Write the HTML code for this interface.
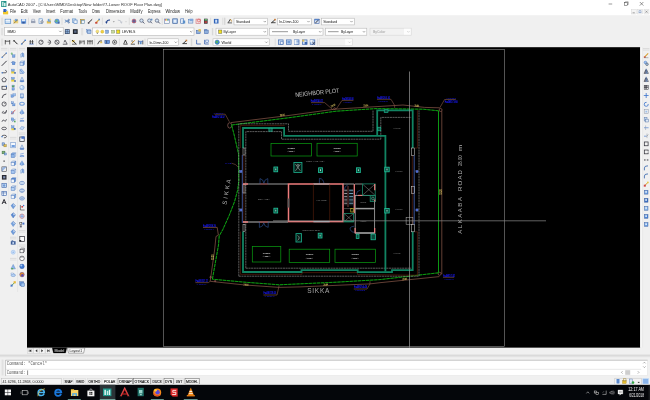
<!DOCTYPE html>
<html lang="en">
<head>
<meta charset="utf-8">
<title>AutoCAD 2007 - Lower ROOF Floor Plan.dwg</title>
<style>
html,body{margin:0;padding:0;width:650px;height:400px;overflow:hidden;background:linear-gradient(#fff 0,#fff 15px,#f0f0f0 15px,#f0f0f0 385px,#04060a 385px,#04060a 400px)}
svg{position:absolute;left:0;top:0;display:block;will-change:transform;filter:blur(0.38px)}
text{font-family:"Liberation Sans",sans-serif;white-space:pre}
text.mono{font-family:"Liberation Mono",monospace}
text.cad{font-family:"Liberation Sans",sans-serif}
</style>
</head>
<body>
<svg width="650" height="400" viewBox="0 0 650 400">
<g id="chrome">
<rect x="0" y="0" width="650" height="400" fill="#f0f0f0"/>
<rect x="0" y="0" width="650" height="15.2" fill="#ffffff"/>
<rect x="1.2" y="1" width="5.2" height="6" fill="#1f8f86"/>
<rect x="2" y="1.8" width="1.6" height="4.4" fill="#bfe6e0"/>
<rect x="4" y="2.8" width="1.6" height="3.4" fill="#d9f2ee"/>
<text x="7.8" y="5.9" font-size="4.4" fill="#303030" textLength="154.2" lengthAdjust="spacingAndGlyphs" class="ui">AutoCAD 2007 - [C:\Users\MMD\Desktop\New folder\!7-Lower ROOF Floor Plan.dwg]</text>
<line x1="608.6" y1="4" x2="612.2" y2="4" stroke="#333" stroke-width="0.5"/>
<rect x="624.4" y="2.6" width="2.8" height="2.8" fill="none" stroke="#333" stroke-width="0.45"/>
<polyline points="625.4,2.6 625.4,1.8 628.2,1.8 628.2,4.6 627.2,4.6" fill="none" stroke="#333" stroke-width="0.4"/>
<line x1="639.8" y1="2" x2="643.4" y2="5.6" stroke="#333" stroke-width="0.5"/>
<line x1="643.4" y1="2" x2="639.8" y2="5.6" stroke="#333" stroke-width="0.5"/>
<rect x="3" y="11.2" width="5.2" height="3.2" fill="#f0c830"/>
<rect x="3.4" y="9" width="2.6" height="3" fill="#2f5fb8"/>
<rect x="5.6" y="9.6" width="1.6" height="1.6" fill="#6fa0e0"/>
<text x="10" y="13.3" font-size="4.5" fill="#1c1c1c" textLength="6" lengthAdjust="spacingAndGlyphs" class="ui">File</text>
<text x="20.8" y="13.3" font-size="4.5" fill="#1c1c1c" textLength="6.9" lengthAdjust="spacingAndGlyphs" class="ui">Edit</text>
<text x="32.8" y="13.3" font-size="4.5" fill="#1c1c1c" textLength="8" lengthAdjust="spacingAndGlyphs" class="ui">View</text>
<text x="46" y="13.3" font-size="4.5" fill="#1c1c1c" textLength="9.4" lengthAdjust="spacingAndGlyphs" class="ui">Insert</text>
<text x="60.3" y="13.3" font-size="4.5" fill="#1c1c1c" textLength="12.7" lengthAdjust="spacingAndGlyphs" class="ui">Format</text>
<text x="78.5" y="13.3" font-size="4.5" fill="#1c1c1c" textLength="8.5" lengthAdjust="spacingAndGlyphs" class="ui">Tools</text>
<text x="92.3" y="13.3" font-size="4.5" fill="#1c1c1c" textLength="7.7" lengthAdjust="spacingAndGlyphs" class="ui">Draw</text>
<text x="106" y="13.3" font-size="4.5" fill="#1c1c1c" textLength="19" lengthAdjust="spacingAndGlyphs" class="ui">Dimension</text>
<text x="130.3" y="13.3" font-size="4.5" fill="#1c1c1c" textLength="12.3" lengthAdjust="spacingAndGlyphs" class="ui">Modify</text>
<text x="148" y="13.3" font-size="4.5" fill="#1c1c1c" textLength="12.5" lengthAdjust="spacingAndGlyphs" class="ui">Express</text>
<text x="165.4" y="13.3" font-size="4.5" fill="#1c1c1c" textLength="14.6" lengthAdjust="spacingAndGlyphs" class="ui">Window</text>
<text x="185" y="13.3" font-size="4.5" fill="#1c1c1c" textLength="7.4" lengthAdjust="spacingAndGlyphs" class="ui">Help</text>
<rect x="631.2" y="9.4" width="5" height="4.6" fill="#f4f4f4" stroke="#d0d0d0" stroke-width="0.4"/>
<rect x="637.6" y="9.4" width="5" height="4.6" fill="#f4f4f4" stroke="#d0d0d0" stroke-width="0.4"/>
<rect x="644" y="9.4" width="5" height="4.6" fill="#f4f4f4" stroke="#d0d0d0" stroke-width="0.4"/>
<line x1="632.6" y1="12.8" x2="634.8" y2="12.8" stroke="#555" stroke-width="0.5"/>
<rect x="639" y="10.8" width="2" height="2" fill="none" stroke="#5b7fb8" stroke-width="0.45"/>
<line x1="645.4" y1="10.6" x2="647.6" y2="12.8" stroke="#555" stroke-width="0.45"/>
<line x1="647.6" y1="10.6" x2="645.4" y2="12.8" stroke="#555" stroke-width="0.45"/>
<line x1="2" y1="17.7" x2="2" y2="24.9" stroke="#b8b8b8" stroke-width="0.5"/><line x1="2.9" y1="17.7" x2="2.9" y2="24.9" stroke="#dcdcdc" stroke-width="0.4"/>
<rect x="5.1" y="19.2" width="5.6" height="4.3" fill="#cfe2f5" stroke="#5b8fc9" stroke-width="0.7"/><rect x="5.7" y="19.8" width="4.4" height="1.2" fill="#eef5fc"/>
<rect x="13.4" y="19.9" width="4.8" height="3.4" fill="#edd27a"/><rect x="14.8" y="18.9" width="2.6" height="2.2" fill="#7aa6d8"/><line x1="13.7" y1="23.4" x2="17.8" y2="19.7" stroke="#6b5a2a" stroke-width="0.6"/>
<rect x="21.1" y="19" width="5" height="4.6" fill="#5f92d6"/><rect x="21.9" y="19.2" width="3.4" height="2" fill="#e6eff9"/><rect x="22.3" y="21.9" width="2.4" height="1.6" fill="#34589a"/>
<line x1="28.5" y1="17.7" x2="28.5" y2="24.9" stroke="#c4c4c4" stroke-width="0.45"/>
<rect x="31" y="20.7" width="4.4" height="2.4" fill="#9aa3b5"/><rect x="31.9" y="19.1" width="2.6" height="2" fill="#e8ecf4" stroke="#7d8aa6" stroke-width="0.4"/>
<rect x="39" y="18.8" width="3.6" height="4.6" fill="#eef4fb" stroke="#5b8fc9" stroke-width="0.6"/><circle cx="42" cy="21.9" r="1.2" fill="#cfe0f4" stroke="#4a4a55" stroke-width="0.5"/>
<rect x="46.8" y="20.9" width="4.2" height="2.6" fill="#e3c050"/><rect x="47.8" y="18.9" width="3" height="2.8" fill="#6f9fd6"/><circle cx="50.3" cy="19.7" r="0.9" fill="#f4e08a"/>
<circle cx="57" cy="21.3" r="2.3" fill="#5aa0d8" stroke="#3f6ea8" stroke-width="0.4"/><circle cx="56.5" cy="21" r="1.1" fill="#74b86a"/><rect x="57.8" y="21.9" width="1.8" height="1.8" fill="#4668a8"/>
<line x1="62" y1="17.7" x2="62" y2="24.9" stroke="#c4c4c4" stroke-width="0.45"/>
<line x1="64.8" y1="19.9" x2="69.2" y2="22.3" stroke="#4a78b8" stroke-width="0.8"/><line x1="64.8" y1="22.3" x2="69.2" y2="19.9" stroke="#4a78b8" stroke-width="0.8"/><circle cx="68.7" cy="20" r="0.8" fill="none" stroke="#3a5f98" stroke-width="0.5"/><circle cx="68.7" cy="22.4" r="0.8" fill="none" stroke="#3a5f98" stroke-width="0.5"/>
<rect x="72.6" y="18.9" width="3.2" height="3.6" fill="#dfeaf7" stroke="#5b8fc9" stroke-width="0.6"/><rect x="73.9" y="20" width="3.2" height="3.6" fill="#eef4fb" stroke="#4a7dbd" stroke-width="0.6"/>
<rect x="80.4" y="19.3" width="4" height="4.2" fill="#d9b452" stroke="#8c7430" stroke-width="0.4"/><rect x="81.7" y="20.5" width="3" height="3.1" fill="#eef4fb" stroke="#5b8fc9" stroke-width="0.5"/>
<line x1="88.2" y1="23.1" x2="92.2" y2="19.3" stroke="#2c2c34" stroke-width="1"/><rect x="87.8" y="22.3" width="1.6" height="1.4" fill="#4a4a55"/>
<line x1="95.8" y1="22.9" x2="99.4" y2="19.3" stroke="#d8a23a" stroke-width="1.2"/><rect x="95.2" y="21.9" width="2.2" height="1.8" fill="#c8483a"/><rect x="98.4" y="18.7" width="1.6" height="1.6" fill="#5b8fc9"/>
<line x1="102.4" y1="17.7" x2="102.4" y2="24.9" stroke="#c4c4c4" stroke-width="0.45"/>
<path d="M106.4 23.1 q0.2 -3.4 3.6 -3.0" fill="none" stroke="#1f3f8a" stroke-width="1.1"/><polygon points="105.3,21.7 107.6,21.7 106.4,23.7" fill="#1f3f8a" stroke="#1f3f8a" stroke-width="0.1"/>
<polygon points="113.1,21.5 114.5,21.5 113.8,22.3" fill="#555" stroke="#555" stroke-width="0.1"/>
<path d="M121.4 23.1 q-0.2 -3.4 -3.6 -3.0" fill="none" stroke="#c4c8d0" stroke-width="1.0"/><polygon points="120.2,21.7 122.5,21.7 121.4,23.7" fill="#c4c8d0" stroke="#c4c8d0" stroke-width="0.1"/>
<polygon points="125.3,21.5 126.7,21.5 126,22.3" fill="#bbb" stroke="#bbb" stroke-width="0.1"/>
<line x1="129.3" y1="17.7" x2="129.3" y2="24.9" stroke="#c4c4c4" stroke-width="0.45"/>
<rect x="132.2" y="19.3" width="3.6" height="3.6" fill="#c9525a"/><line x1="131.6" y1="21.1" x2="136.4" y2="21.1" stroke="#3d66ad" stroke-width="0.8"/><line x1="134" y1="18.7" x2="134" y2="23.5" stroke="#3d66ad" stroke-width="0.8"/>
<circle cx="141.5" cy="20.6" r="1.7" fill="#d6e6f6" stroke="#3f4a66" stroke-width="0.6"/><line x1="142.7" y1="21.8" x2="144.4" y2="23.5" stroke="#3f4a66" stroke-width="0.9"/>
<circle cx="149.3" cy="20.6" r="1.7" fill="#d6e6f6" stroke="#3f4a66" stroke-width="0.6"/><line x1="150.5" y1="21.8" x2="152" y2="23.3" stroke="#3f4a66" stroke-width="0.9"/><rect x="150.8" y="18.7" width="1.6" height="1.6" fill="#5b8fc9"/>
<circle cx="157" cy="20.6" r="1.7" fill="#d6e6f6" stroke="#3f4a66" stroke-width="0.6"/><line x1="158.2" y1="21.8" x2="159.9" y2="23.5" stroke="#3f4a66" stroke-width="0.9"/>
<line x1="162.2" y1="17.7" x2="162.2" y2="24.9" stroke="#c4c4c4" stroke-width="0.45"/>
<rect x="164.7" y="19" width="4.6" height="4.4" fill="#f4f6fa" stroke="#5570a0" stroke-width="0.5"/><rect x="165" y="19.3" width="0.9" height="1.2" fill="#d83a3a"/><rect x="166.05" y="19.3" width="0.9" height="1.2" fill="#e8c030"/><rect x="167.1" y="19.3" width="0.9" height="1.2" fill="#38a848"/><rect x="168.15" y="19.3" width="0.9" height="1.2" fill="#3a68d0"/>
<rect x="172.7" y="18.8" width="4.6" height="4.8" fill="#8fb4e0" stroke="#3f6098" stroke-width="0.6"/><rect x="173.6" y="19.7" width="2.8" height="3" fill="#e6eef9"/>
<rect x="180.7" y="18.8" width="3" height="4.8" fill="#e6eef9" stroke="#4a76b6" stroke-width="0.6"/><rect x="182.8" y="20.5" width="2.4" height="3" fill="#5b8fc9"/>
<rect x="188.5" y="19.5" width="4.4" height="3.6" fill="#cfe0f4" stroke="#4a76b6" stroke-width="0.5"/><rect x="189.6" y="18.7" width="3.6" height="2.4" fill="#7ea7dc"/>
<rect x="196" y="19.1" width="4.4" height="4.2" fill="#f3dede" stroke="#d0707a" stroke-width="0.6"/><circle cx="198.8" cy="20.5" r="1.4" fill="none" stroke="#d84a4a" stroke-width="0.6"/>
<rect x="204" y="18.7" width="3.6" height="5" fill="#2c2f36"/><rect x="204.5" y="19.2" width="2.6" height="1.3" fill="#7ad07a"/><rect x="204.5" y="21.1" width="2.6" height="2" fill="#b04040"/>
<line x1="210.6" y1="17.7" x2="210.6" y2="24.9" stroke="#c4c4c4" stroke-width="0.45"/>
<rect x="213.9" y="18.9" width="4.6" height="4.6" fill="#2f62b8"/><rect x="215.2" y="19.7" width="2" height="3" fill="#cfe0f8"/>
<line x1="222.8" y1="17.7" x2="222.8" y2="24.9" stroke="#c4c4c4" stroke-width="0.45"/>
<line x1="227.6" y1="22.9" x2="232" y2="22.9" stroke="#333" stroke-width="0.7"/><line x1="228.2" y1="22.7" x2="230.4" y2="19.1" stroke="#333" stroke-width="0.9"/><line x1="230.4" y1="19.1" x2="231.6" y2="21.5" stroke="#c08a30" stroke-width="0.9"/>
<line x1="271" y1="22.7" x2="275.6" y2="22.7" stroke="#222" stroke-width="0.8"/><line x1="271.8" y1="22.5" x2="274.8" y2="19.9" stroke="#222" stroke-width="0.9"/><rect x="274.2" y="18.8" width="1.6" height="1.6" fill="#c87830"/>
<rect x="314.7" y="19.1" width="4.4" height="4.2" fill="#dbe7f7" stroke="#3f63a8" stroke-width="0.6"/><line x1="315.4" y1="23.1" x2="319.2" y2="19.1" stroke="#2b2b33" stroke-width="0.9"/><rect x="314.7" y="19.1" width="4.4" height="1.2" fill="#4f7fc8"/>
<line x1="224.6" y1="17.7" x2="224.6" y2="24.9" stroke="#b8b8b8" stroke-width="0.5"/><line x1="225.5" y1="17.7" x2="225.5" y2="24.9" stroke="#dcdcdc" stroke-width="0.4"/>
<rect x="234" y="18.2" width="33.6" height="6.7" fill="#ffffff" stroke="#b4b4b4" stroke-width="0.55"/><polyline points="263.6,20.95 264.8,22.15 266,20.95" fill="none" stroke="#555" stroke-width="0.5"/>
<text x="236" y="23" font-size="4.4" fill="#111" textLength="14.2" lengthAdjust="spacingAndGlyphs" class="ui">Standard</text>
<rect x="277.5" y="18.2" width="33.8" height="6.7" fill="#ffffff" stroke="#b4b4b4" stroke-width="0.55"/><polyline points="307.3,20.95 308.5,22.15 309.7,20.95" fill="none" stroke="#555" stroke-width="0.5"/>
<text x="279.3" y="23" font-size="4.4" fill="#111" textLength="19.2" lengthAdjust="spacingAndGlyphs" class="ui">In-Dimn-100</text>
<rect x="321.6" y="18.2" width="32.7" height="6.7" fill="#ffffff" stroke="#b4b4b4" stroke-width="0.55"/><polyline points="350.3,20.95 351.5,22.15 352.7,20.95" fill="none" stroke="#555" stroke-width="0.5"/>
<text x="323.2" y="23" font-size="4.4" fill="#111" textLength="14" lengthAdjust="spacingAndGlyphs" class="ui">Standard</text>
<line x1="2" y1="28.1" x2="2" y2="35.3" stroke="#b8b8b8" stroke-width="0.5"/><line x1="2.9" y1="28.1" x2="2.9" y2="35.3" stroke="#dcdcdc" stroke-width="0.4"/>
<rect x="4.6" y="27.4" width="58.6" height="8" fill="#ffffff" stroke="#b4b4b4" stroke-width="0.55"/><polyline points="59.2,30.8 60.4,32 61.6,30.8" fill="none" stroke="#555" stroke-width="0.5"/>
<text x="7.4" y="33.2" font-size="4.2" fill="#111" textLength="8.4" lengthAdjust="spacingAndGlyphs" class="ui">MMD</text>
<rect x="64.9" y="29.2" width="4.8" height="4.8" fill="#3a4a66"/><rect x="65.6" y="29.9" width="3.4" height="3.4" fill="#8fb4e0"/><line x1="67.3" y1="29.2" x2="67.3" y2="34" stroke="#3a4a66" stroke-width="0.5"/><line x1="64.9" y1="31.6" x2="69.7" y2="31.6" stroke="#3a4a66" stroke-width="0.5"/>
<rect x="72.9" y="29.2" width="4.8" height="4.8" fill="#23272e"/><rect x="74.1" y="30.4" width="2.4" height="2.4" fill="#5a6a86"/>
<line x1="82" y1="28.1" x2="82" y2="35.3" stroke="#b8b8b8" stroke-width="0.5"/><line x1="82.9" y1="28.1" x2="82.9" y2="35.3" stroke="#dcdcdc" stroke-width="0.4"/>
<rect x="86.6" y="29.5" width="3.6" height="2.6" fill="#dbe7f7" stroke="#5b84c0" stroke-width="0.5"/><rect x="87.4" y="30.7" width="3.6" height="2.8" fill="#a8c4e8" stroke="#4a70b0" stroke-width="0.5"/>
<rect x="92.6" y="27.9" width="101.4" height="7.4" fill="#ffffff" stroke="#b4b4b4" stroke-width="0.55"/><polyline points="190,31 191.2,32.2 192.4,31" fill="none" stroke="#555" stroke-width="0.5"/>
<circle cx="97.4" cy="31.4" r="1.5" fill="#f6e27a" stroke="#b8a040" stroke-width="0.3"/>
<rect x="96.8" y="32.7" width="1.2" height="1.2" fill="#909090"/>
<circle cx="102.3" cy="31.7" r="1.6" fill="#f0d040" stroke="#c0a030" stroke-width="0.3"/>
<rect x="105.6" y="30.1" width="3" height="3.2" fill="#8fb0dc" stroke="#4a70b0" stroke-width="0.4"/>
<rect x="111.6" y="30.3" width="3.2" height="2.8" fill="#c8d8a0" stroke="#7a9050" stroke-width="0.4"/>
<rect x="116.6" y="30" width="3.3" height="3.4" fill="#f0e020" stroke="#555" stroke-width="0.4"/>
<text x="122" y="33.1" font-size="4.4" fill="#111" textLength="13.4" lengthAdjust="spacingAndGlyphs" class="ui">LEVELS</text>
<rect x="196.4" y="30.5" width="3.8" height="3.2" fill="#8fb0dc" stroke="#3f63a8" stroke-width="0.5"/><rect x="198.4" y="29.1" width="2.4" height="2.4" fill="#e3c050"/>
<rect x="204.4" y="30.1" width="3.8" height="3.6" fill="#8fb0dc" stroke="#3f63a8" stroke-width="0.5"/><line x1="204.2" y1="29.7" x2="207.2" y2="29.7" stroke="#3f63a8" stroke-width="0.8"/>
<line x1="212.4" y1="28.1" x2="212.4" y2="35.3" stroke="#b8b8b8" stroke-width="0.5"/><line x1="213.3" y1="28.1" x2="213.3" y2="35.3" stroke="#dcdcdc" stroke-width="0.4"/>
<rect x="216" y="28.2" width="51.6" height="7" fill="#ffffff" stroke="#b4b4b4" stroke-width="0.55"/><polyline points="263.6,31.1 264.8,32.3 266,31.1" fill="none" stroke="#555" stroke-width="0.5"/>
<rect x="218.6" y="30" width="3.3" height="3.4" fill="#f0e020" stroke="#444" stroke-width="0.4"/>
<text x="223.6" y="33.1" font-size="4.4" fill="#111" textLength="12.4" lengthAdjust="spacingAndGlyphs" class="ui">ByLayer</text>
<rect x="269.6" y="28.2" width="53.4" height="7" fill="#ffffff" stroke="#b4b4b4" stroke-width="0.55"/><polyline points="319,31.1 320.2,32.3 321.4,31.1" fill="none" stroke="#555" stroke-width="0.5"/>
<line x1="272" y1="31.7" x2="288" y2="31.7" stroke="#8c8c8c" stroke-width="0.9"/>
<text x="293" y="33.1" font-size="4.4" fill="#111" textLength="12.2" lengthAdjust="spacingAndGlyphs" class="ui">ByLayer</text>
<rect x="325.4" y="28.2" width="41.4" height="7" fill="#ffffff" stroke="#b4b4b4" stroke-width="0.55"/><polyline points="362.8,31.1 364,32.3 365.2,31.1" fill="none" stroke="#555" stroke-width="0.5"/>
<line x1="328" y1="31.7" x2="338.6" y2="31.7" stroke="#8c8c8c" stroke-width="0.9"/>
<text x="341" y="33.1" font-size="4.4" fill="#111" textLength="12.2" lengthAdjust="spacingAndGlyphs" class="ui">ByLayer</text>
<rect x="370" y="28.2" width="41.2" height="7" fill="#f2f2f2" stroke="#d8d8d8" stroke-width="0.6"/><rect x="404" y="28.7" width="6.7" height="6" fill="#fdfdfd"/><polyline points="407.2,31.1 408.4,32.3 409.6,31.1" fill="none" stroke="#b4b4b4" stroke-width="0.5"/>
<text x="373" y="33.1" font-size="4.4" fill="#9a9a9a" textLength="12.4" lengthAdjust="spacingAndGlyphs" class="ui">ByColor</text>
<line x1="2" y1="38.6" x2="2" y2="45.8" stroke="#b8b8b8" stroke-width="0.5"/><line x1="2.9" y1="38.6" x2="2.9" y2="45.8" stroke="#dcdcdc" stroke-width="0.4"/>
<line x1="5.3" y1="40" x2="5.3" y2="44.4" stroke="#222" stroke-width="0.7"/><line x1="9.7" y1="40" x2="9.7" y2="44.4" stroke="#222" stroke-width="0.7"/><line x1="5.3" y1="41.2" x2="9.7" y2="41.2" stroke="#222" stroke-width="0.7"/>
<line x1="13.5" y1="40.2" x2="17.5" y2="44.2" stroke="#222" stroke-width="1"/><line x1="13.3" y1="41.6" x2="14.9" y2="40" stroke="#222" stroke-width="0.6"/>
<line x1="21.5" y1="44.2" x2="25.1" y2="40.4" stroke="#333" stroke-width="0.8"/><rect x="24.5" y="39.6" width="1.4" height="1.4" fill="#3a78d0"/><rect x="21.1" y="43.4" width="1.4" height="1.2" fill="#3a78d0"/>
<line x1="29.3" y1="44" x2="33.7" y2="44" stroke="#3a68c0" stroke-width="0.8"/><line x1="30.3" y1="40" x2="30.3" y2="44" stroke="#222" stroke-width="0.7"/><line x1="32.5" y1="40" x2="32.5" y2="44" stroke="#222" stroke-width="0.7"/><line x1="29.3" y1="41.8" x2="33.7" y2="41.8" stroke="#222" stroke-width="0.5"/>
<line x1="36.5" y1="38.6" x2="36.5" y2="45.8" stroke="#c4c4c4" stroke-width="0.45"/>
<circle cx="41" cy="42.2" r="2.1" fill="none" stroke="#2a2a32" stroke-width="0.7"/><line x1="41" y1="42.2" x2="42.4" y2="40.8" stroke="#2a2a32" stroke-width="0.6"/>
<path d="M48.6 40.1 a2.1 2.1 0 1 1 0 4.2" fill="none" stroke="#2a2a32" stroke-width="0.7"/><line x1="47.6" y1="42.2" x2="50.2" y2="42.2" stroke="#2a2a32" stroke-width="0.6"/>
<circle cx="57" cy="42.2" r="2.1" fill="none" stroke="#2a2a32" stroke-width="0.7"/><line x1="55.5" y1="40.7" x2="58.5" y2="43.7" stroke="#2a2a32" stroke-width="0.6"/>
<polyline points="62.8,44.2 67.2,44.2 65,40.2 64,42.4" fill="none" stroke="#2a2a32" stroke-width="0.7"/>
<line x1="70" y1="38.6" x2="70" y2="45.8" stroke="#c4c4c4" stroke-width="0.45"/>
<rect x="71.9" y="40" width="2.6" height="2.2" fill="#e3c050"/><line x1="72" y1="40" x2="76.4" y2="44.2" stroke="#222" stroke-width="0.9"/><line x1="72" y1="44.2" x2="76.4" y2="44.2" stroke="#222" stroke-width="0.6"/>
<line x1="79.8" y1="40.4" x2="79.8" y2="44.4" stroke="#222" stroke-width="0.7"/><line x1="84.2" y1="40.4" x2="84.2" y2="44.4" stroke="#222" stroke-width="0.7"/><line x1="79.8" y1="41.2" x2="84.2" y2="41.2" stroke="#222" stroke-width="0.6"/><line x1="79.8" y1="42.8" x2="82.4" y2="42.8" stroke="#222" stroke-width="0.6"/>
<line x1="87.8" y1="40" x2="87.8" y2="44.4" stroke="#222" stroke-width="0.7"/><line x1="90" y1="40" x2="90" y2="44.4" stroke="#222" stroke-width="0.7"/><line x1="92.2" y1="40" x2="92.2" y2="44.4" stroke="#222" stroke-width="0.7"/><line x1="87.8" y1="41.2" x2="92.2" y2="41.2" stroke="#222" stroke-width="0.6"/>
<line x1="94.6" y1="38.6" x2="94.6" y2="45.8" stroke="#c4c4c4" stroke-width="0.45"/>
<line x1="97.6" y1="44.2" x2="99.6" y2="41" stroke="#222" stroke-width="0.8"/><line x1="99.6" y1="41" x2="102" y2="41" stroke="#222" stroke-width="0.8"/><rect x="100.2" y="41.6" width="2" height="1.6" fill="#e3c050"/>
<rect x="104.9" y="40.4" width="4.6" height="3.2" fill="#6a9ae0" stroke="#2a4a90" stroke-width="0.5"/><line x1="106.6" y1="40.6" x2="106.6" y2="43.4" stroke="#222" stroke-width="0.5"/>
<circle cx="114.6" cy="42.2" r="2.1" fill="none" stroke="#222" stroke-width="0.6"/><line x1="113.6" y1="42.2" x2="115.6" y2="42.2" stroke="#222" stroke-width="0.6"/><line x1="114.6" y1="41.2" x2="114.6" y2="43.2" stroke="#222" stroke-width="0.6"/>
<line x1="119.4" y1="38.6" x2="119.4" y2="45.8" stroke="#c4c4c4" stroke-width="0.45"/>
<line x1="123.4" y1="44.2" x2="127.6" y2="44.2" stroke="#222" stroke-width="0.7"/><polyline points="123.8,43.8 125.4,40 127,43.8" fill="none" stroke="#222" stroke-width="0.8"/>
<line x1="130.8" y1="44.2" x2="135" y2="44.2" stroke="#222" stroke-width="0.7"/><line x1="131.4" y1="43.6" x2="134.8" y2="40.4" stroke="#c08a30" stroke-width="1"/><line x1="131.2" y1="41" x2="133" y2="41" stroke="#222" stroke-width="0.6"/>
<line x1="138.4" y1="40.4" x2="138.4" y2="44.4" stroke="#222" stroke-width="0.7"/><line x1="142.8" y1="40.4" x2="142.8" y2="44.4" stroke="#222" stroke-width="0.7"/><line x1="138.4" y1="41.4" x2="142.8" y2="41.4" stroke="#3a68c0" stroke-width="0.8"/><rect x="139.8" y="42" width="1.8" height="2.2" fill="#5b8fc9"/>
<line x1="145" y1="38.6" x2="145" y2="45.8" stroke="#c4c4c4" stroke-width="0.45"/>
<line x1="182.4" y1="43.6" x2="187" y2="43.6" stroke="#222" stroke-width="0.8"/><line x1="183.2" y1="43.4" x2="186.2" y2="40.8" stroke="#222" stroke-width="0.9"/><rect x="185.6" y="39.7" width="1.6" height="1.6" fill="#c87830"/>
<line x1="196.6" y1="39.8" x2="196.6" y2="44" stroke="#3a62b0" stroke-width="0.8"/><line x1="196.6" y1="44" x2="200.8" y2="44" stroke="#3a62b0" stroke-width="0.8"/>
<line x1="204.6" y1="39.8" x2="204.6" y2="44" stroke="#3a62b0" stroke-width="0.8"/><line x1="204.6" y1="44" x2="208.8" y2="44" stroke="#3a62b0" stroke-width="0.8"/><rect x="205.8" y="40" width="2.8" height="2.6" fill="#dbe7f7" stroke="#3a62b0" stroke-width="0.5"/>
<line x1="275.2" y1="38.6" x2="275.2" y2="45.8" stroke="#c4c4c4" stroke-width="0.45"/>
<rect x="278.5" y="39.9" width="4.6" height="4.4" fill="#c9dcf3" stroke="#3f68b0" stroke-width="0.7"/><rect x="280.4" y="41.8" width="2.6" height="2.4" fill="#f4f8fd" stroke="#3f68b0" stroke-width="0.5"/>
<rect x="286.5" y="39.9" width="4.6" height="4.4" fill="#c9dcf3" stroke="#3f68b0" stroke-width="0.7"/><rect x="287.4" y="40.8" width="2.8" height="2.6" fill="#6f9bd8"/>
<rect x="294.4" y="39.9" width="4.6" height="4.4" fill="#c9dcf3" stroke="#3f68b0" stroke-width="0.7"/><rect x="294.4" y="39.9" width="2" height="4.4" fill="#eef4fb"/><line x1="296.4" y1="41.8" x2="299" y2="41.8" stroke="#3f68b0" stroke-width="0.5"/>
<rect x="302.4" y="39.9" width="4.6" height="4.4" fill="#c9dcf3" stroke="#3f68b0" stroke-width="0.7"/><rect x="302.3" y="39.6" width="2" height="2" fill="#e3c050"/><rect x="304.7" y="42" width="2.4" height="2.4" fill="#3f68b0"/>
<rect x="310.2" y="39.9" width="4.6" height="4.4" fill="#c9dcf3" stroke="#3f68b0" stroke-width="0.7"/><rect x="310.2" y="39.9" width="2.4" height="2.4" fill="#eef4fb"/><line x1="312.3" y1="42" x2="314.9" y2="44.4" stroke="#2a3350" stroke-width="0.8"/><line x1="314.9" y1="42" x2="312.3" y2="44.4" stroke="#2a3350" stroke-width="0.8"/>
<line x1="317.6" y1="38.6" x2="317.6" y2="45.8" stroke="#c4c4c4" stroke-width="0.45"/>
<rect x="147.8" y="38.8" width="30.8" height="6.8" fill="#ffffff" stroke="#b4b4b4" stroke-width="0.55"/><polyline points="174.6,41.6 175.8,42.8 177,41.6" fill="none" stroke="#555" stroke-width="0.5"/>
<text x="149.4" y="43.7" font-size="4.4" fill="#111" textLength="19" lengthAdjust="spacingAndGlyphs" class="ui">In-Dimn-100</text>
<line x1="191.4" y1="38.6" x2="191.4" y2="45.8" stroke="#b8b8b8" stroke-width="0.5"/><line x1="192.3" y1="38.6" x2="192.3" y2="45.8" stroke="#dcdcdc" stroke-width="0.4"/>
<rect x="213" y="38.8" width="56.2" height="6.8" fill="#ffffff" stroke="#b4b4b4" stroke-width="0.55"/><polyline points="265.2,41.6 266.4,42.8 267.6,41.6" fill="none" stroke="#555" stroke-width="0.5"/>
<circle cx="217.2" cy="42.2" r="2.2" fill="#3f8fd0" stroke="#2a5a98" stroke-width="0.4"/><circle cx="216.8" cy="42" r="1.2" fill="#58b060"/>
<text x="221.6" y="43.7" font-size="4.4" fill="#111" textLength="9.8" lengthAdjust="spacingAndGlyphs" class="ui">World</text>
<rect x="319.2" y="38.8" width="33.2" height="6.8" fill="#f2f2f2" stroke="#d8d8d8" stroke-width="0.6"/><rect x="345.2" y="39.3" width="6.7" height="5.8" fill="#fdfdfd"/><polyline points="348.4,41.6 349.6,42.8 350.8,41.6" fill="none" stroke="#b4b4b4" stroke-width="0.5"/>
<rect x="27" y="47.2" width="613.2" height="300.6" fill="#000000"/>
<rect x="163.4" y="49.3" width="341" height="297" fill="none" stroke="#a8a8a8" stroke-width="0.5"/>
</g>
<g id="drawing">
<text x="295.4" y="96.9" font-size="6.3" fill="#c4c4c4" class="cad" textLength="44.4" lengthAdjust="spacingAndGlyphs" transform="rotate(-5.6 295.4 96.9)">NEIGHBOR PLOT</text>
<text x="307.2" y="292.8" font-size="6.5" fill="#a8a8a8" class="cad" textLength="22.2" lengthAdjust="spacing">SIKKA</text>
<text x="226.4" y="205.0" font-size="6.2" fill="#b4b4b4" class="cad" textLength="25.8" lengthAdjust="spacing" transform="rotate(-80 226.4 205.0)">SIKKA</text>
<text x="461.9" y="233.7" font-size="6.1" fill="#b4b4b4" class="cad" textLength="36.7" lengthAdjust="spacing" transform="rotate(-90 461.9 233.7)">ALKAABA</text>
<text x="461.9" y="191.0" font-size="6.1" fill="#b4b4b4" class="cad" textLength="21.0" lengthAdjust="spacing" transform="rotate(-90 461.9 191.0)">ROAD</text>
<text x="461.9" y="166.0" font-size="6.1" fill="#b4b4b4" class="cad" textLength="10.6" lengthAdjust="spacingAndGlyphs" transform="rotate(-90 461.9 166.0)">28.00</text>
<text x="461.9" y="151.0" font-size="6.1" fill="#b4b4b4" class="cad" textLength="6.2" lengthAdjust="spacingAndGlyphs" transform="rotate(-90 461.9 151.0)">m</text>
<polyline points="231,122.6 290,115.3 334.6,109.2 403,105 424.6,107.4 439.4,107.8" fill="none" stroke="#8c5a4a" stroke-width="0.7"/>
<polyline points="441.8,111.2 441.8,274.2" fill="none" stroke="#8c5a4a" stroke-width="0.7"/>
<polyline points="439.4,276.6 380,282.7 370,283.9 300,286.9 279.2,287.4 245,285 210.2,281.3" fill="none" stroke="#8c5a4a" stroke-width="0.7"/>
<polyline points="210.2,281.2 214.6,250 216,236.4 218.4,235.2 217.2,227.4 203,227.4" fill="none" stroke="#8c5a4a" stroke-width="0.7"/>
<polyline points="214.6,114.2 225.2,114.2 229.4,121.8" fill="none" stroke="#8c5a4a" stroke-width="0.6"/>
<polyline points="311,102.6 324.6,102.6 333.2,110" fill="none" stroke="#8c5a4a" stroke-width="0.6"/>
<polyline points="353.4,100.4 342,100.4 336,109.4" fill="none" stroke="#8c5a4a" stroke-width="0.6"/>
<polyline points="377,99.3 391,99.3 394.6,105.4 394.6,107.8" fill="none" stroke="#8c5a4a" stroke-width="0.6"/>
<polyline points="455.8,99.5 444.6,99.5 439.4,108.4" fill="none" stroke="#8c5a4a" stroke-width="0.6"/>
<polyline points="263.4,295 277,295 279.2,285.4" fill="none" stroke="#8c5a4a" stroke-width="0.6"/>
<polyline points="353.8,289 367,289 370,283.9 370,281.2" fill="none" stroke="#8c5a4a" stroke-width="0.6"/>
<polyline points="443,277.3 454.2,277.3" fill="none" stroke="#8c5a4a" stroke-width="0.6"/>
<polyline points="195.4,282.6 208.4,282.6 210.2,281.3" fill="none" stroke="#8c5a4a" stroke-width="0.6"/>
<path d="M231.5 163.2 q4.6 0.6 7.0 4.4" fill="none" stroke="#8c5a4a" stroke-width="0.55"/>
<ellipse cx="229.7" cy="125.4" rx="2.0" ry="2.7" fill="none" stroke="#c8847a" stroke-width="0.5"/>
<circle cx="440.6" cy="110" r="1.5" fill="none" stroke="#c87c70" stroke-width="0.5"/>
<circle cx="439.6" cy="273.8" r="1.5" fill="none" stroke="#c87c70" stroke-width="0.5"/>
<circle cx="210.6" cy="277.2" r="0.8" fill="none" stroke="#e08a80" stroke-width="0.4"/>
<circle cx="215.2" cy="281" r="0.7" fill="none" stroke="#e08a80" stroke-width="0.4"/>
<circle cx="334.6" cy="108.6" r="0.9" fill="none" stroke="#c87c70" stroke-width="0.4"/>
<path d="M231.6 125 L290 117.6 L336 111.2 L376 108.6 L423 109.2 L438.5 110.8 L438.5 272.8 L380 279.6 L336 282.2 L290 284.3 L279.2 284.8 L245 282.2 L212.4 279.2 L218.5 245 L219.2 236 L223 229.2 L229.2 215.4 L234.6 201.5 L237.7 190 L238.8 181 L238.6 154.2 L234.2 135 Z" fill="none" stroke="#085408" stroke-width="0.7"/>
<polyline points="231.6,125 290,117.6 336,111.2 376,108.6 423,109.2 438.5,110.8" fill="none" stroke="#0fbc16" stroke-width="0.75" stroke-dasharray="3.2 0.9"/>
<line x1="438.5" y1="110.8" x2="438.5" y2="272.8" stroke="#0eb016" stroke-width="0.8"/>
<polyline points="438.5,272.8 380,279.6 336,282.2 290,284.3 279.2,284.8 245,282.2 212.4,279.2" fill="none" stroke="#0fbc16" stroke-width="0.75" stroke-dasharray="3.2 0.9"/>
<path d="M212.4 279.2 L218.5 245 L219.2 236 L223 229.2 L229.2 215.4 L234.6 201.5 L237.7 190 L238.8 181 L238.6 154.2 L234.2 135 L231.6 125" fill="none" stroke="#0fbc16" stroke-width="0.8" stroke-dasharray="3.2 0.9"/>
<polyline points="238.8,276.2 238.8,123.8 288.5,123.8 288.5,131.3 373,131.3 373,110.2" fill="none" stroke="#a4a4a4" stroke-width="0.55" stroke-dasharray="2.1 0.55"/>
<polyline points="238.8,276.2 419,276.2 419,110.4" fill="none" stroke="#a4a4a4" stroke-width="0.55" stroke-dasharray="2.1 0.55"/>
<polyline points="245.8,268.2 245.8,131.6 281.5,131.6 281.5,139.2 380.8,139.2 380.8,117.4 411.2,117.4" fill="none" stroke="#a4a4a4" stroke-width="0.55" stroke-dasharray="2.1 0.55"/>
<polyline points="245.8,268.2 411.2,268.2" fill="none" stroke="#a4a4a4" stroke-width="0.55" stroke-dasharray="2.1 0.55"/>
<polyline points="240.4,148 240.4,125.4 284.6,125.4" fill="none" stroke="#5a200c" stroke-width="0.7"/>
<line x1="243.9" y1="155" x2="243.9" y2="223" stroke="#5a200c" stroke-width="0.7"/>
<polyline points="240.4,231.5 240.4,274.3 302,274.3 302,272.6 357.4,272.6 357.4,274.6 417.4,275.2 417.4,231.8 414.6,231.8" fill="none" stroke="#5a200c" stroke-width="0.7"/>
<polyline points="417.4,110.2 417.4,148 414.6,148" fill="none" stroke="#5a200c" stroke-width="0.7"/>
<line x1="412.3" y1="155.3" x2="412.3" y2="224.6" stroke="#5a200c" stroke-width="0.7"/>
<polyline points="243,148 243,128 284.1,128 284.1,135.8 385.4,135.8 385.4,271.4" fill="none" stroke="#118362" stroke-width="1.8"/>
<polyline points="377.2,135.8 377.2,110.3 412.7,110.3 412.7,148" fill="none" stroke="#118362" stroke-width="1.8"/>
<polyline points="243,231.5 243,272 301.5,272 301.5,270.2 357.7,270.2 357.7,272.2 392,272.2 392,270.2 412.7,270.2 412.7,231.8" fill="none" stroke="#118362" stroke-width="1.8"/>
<line x1="242.3" y1="155" x2="242.3" y2="223" stroke="#5a78d8" stroke-width="0.7"/>
<line x1="414.2" y1="155.3" x2="414.2" y2="224.6" stroke="#5a78d8" stroke-width="0.7"/>
<rect x="239.7" y="170.4" width="2.2" height="2.2" fill="#4a66d0" stroke="#8aa0f0" stroke-width="0.3"/>
<rect x="239.7" y="208.9" width="2.2" height="2.2" fill="#4a66d0" stroke="#8aa0f0" stroke-width="0.3"/>
<rect x="415.9" y="170.4" width="2.2" height="2.2" fill="#4a66d0" stroke="#8aa0f0" stroke-width="0.3"/>
<rect x="415.9" y="208.9" width="2.2" height="2.2" fill="#4a66d0" stroke="#8aa0f0" stroke-width="0.3"/>
<rect x="243" y="148" width="2" height="7" fill="none" stroke="#d8d8d8" stroke-width="0.5"/>
<rect x="243" y="184.6" width="2" height="8.4" fill="none" stroke="#d8d8d8" stroke-width="0.5"/>
<rect x="243" y="224.6" width="2" height="6.9" fill="none" stroke="#d8d8d8" stroke-width="0.5"/>
<rect x="411.6" y="148" width="3" height="7.3" fill="none" stroke="#d8d8d8" stroke-width="0.5"/>
<rect x="411.6" y="186.5" width="3" height="6.9" fill="none" stroke="#d8d8d8" stroke-width="0.5"/>
<rect x="411.6" y="224.6" width="3" height="7.2" fill="none" stroke="#d8d8d8" stroke-width="0.5"/>
<text x="225" y="164" font-size="2.2" fill="#1c1cff" textLength="6.4" lengthAdjust="spacingAndGlyphs" class="cad">GATE</text>
<rect x="271" y="143.5" width="40.5" height="12.5" fill="none" stroke="#0aa012" stroke-width="0.7"/><text x="287.55" y="149.15" font-size="2.5" fill="#ececec" textLength="7.4" lengthAdjust="spacingAndGlyphs" class="cad">GREEN</text><text x="287.55" y="152.45" font-size="2.5" fill="#ececec" textLength="7.4" lengthAdjust="spacingAndGlyphs" class="cad">AREA</text>
<rect x="317" y="143.3" width="40.2" height="12.7" fill="none" stroke="#0aa012" stroke-width="0.7"/><text x="333.4" y="149.05" font-size="2.5" fill="#ececec" textLength="7.4" lengthAdjust="spacingAndGlyphs" class="cad">GREEN</text><text x="333.4" y="152.35" font-size="2.5" fill="#ececec" textLength="7.4" lengthAdjust="spacingAndGlyphs" class="cad">AREA</text>
<rect x="252.3" y="246.4" width="28.5" height="15.6" fill="none" stroke="#0aa012" stroke-width="0.7"/><text x="262.85" y="253.6" font-size="2.5" fill="#ececec" textLength="7.4" lengthAdjust="spacingAndGlyphs" class="cad">GREEN</text><text x="262.85" y="256.9" font-size="2.5" fill="#ececec" textLength="7.4" lengthAdjust="spacingAndGlyphs" class="cad">AREA</text>
<rect x="289.2" y="249.2" width="40.5" height="13.2" fill="none" stroke="#0aa012" stroke-width="0.7"/><text x="305.75" y="255.2" font-size="2.5" fill="#ececec" textLength="7.4" lengthAdjust="spacingAndGlyphs" class="cad">GREEN</text><text x="305.75" y="258.5" font-size="2.5" fill="#ececec" textLength="7.4" lengthAdjust="spacingAndGlyphs" class="cad">AREA</text>
<rect x="335" y="249.2" width="40.4" height="13.2" fill="none" stroke="#0aa012" stroke-width="0.7"/><text x="351.5" y="255.2" font-size="2.5" fill="#ececec" textLength="7.4" lengthAdjust="spacingAndGlyphs" class="cad">GREEN</text><text x="351.5" y="258.5" font-size="2.5" fill="#ececec" textLength="7.4" lengthAdjust="spacingAndGlyphs" class="cad">AREA</text>
<line x1="243" y1="184" x2="288" y2="184" stroke="#9a9a9a" stroke-width="1.1"/>
<line x1="243" y1="222" x2="288" y2="222" stroke="#b8b8b8" stroke-width="1"/>
<rect x="243" y="183.3" width="5" height="1.4" fill="#ee7c7c"/>
<rect x="243" y="221.3" width="5" height="1.4" fill="#ee7c7c"/>
<rect x="259.6" y="183.4" width="8.4" height="1.2" fill="#7a3434"/>
<rect x="259.2" y="221.4" width="9" height="1.2" fill="#a04848"/>
<path d="M260 184 v-5.4 q3.4 0.6 3.9 4.6 q0.5 -4.0 3.9 -4.6 v5.4" fill="none" stroke="#3a66b8" stroke-width="0.5"/>
<path d="M259.4 222 v5.4 q3.8 -0.6 4.4 -4.4 q0.6 3.8 4.4 4.4 v-5.4" fill="none" stroke="#3a66b8" stroke-width="0.5"/>
<path d="M319.4 184 v-5.6 q4.2 0.2 4.6 5.6" fill="none" stroke="#3a66b8" stroke-width="0.5"/>
<path d="M356.2 194.8 q0.4 -4.2 4.2 -4.6" fill="none" stroke="#3a66b8" stroke-width="0.5"/>
<path d="M354.6 232.4 q-4.4 -0.4 -4.6 -4.4 q1.4 -1.6 4.0 -1.8" fill="none" stroke="#3a66b8" stroke-width="0.5"/>
<rect x="288.5" y="184" width="54.5" height="37.6" fill="none" stroke="#ee7c7c" stroke-width="1.5"/>
<line x1="313.4" y1="184" x2="329.7" y2="184" stroke="#a0a0a0" stroke-width="1.3"/>
<line x1="313.4" y1="221.6" x2="329.7" y2="221.6" stroke="#b0b0b8" stroke-width="1.3"/>
<line x1="288.5" y1="198.5" x2="288.5" y2="207.6" stroke="#5a5a5a" stroke-width="1.7"/>
<line x1="313.4" y1="184.6" x2="313.4" y2="221" stroke="#5a200c" stroke-width="0.6"/>
<line x1="329.7" y1="184.6" x2="329.7" y2="221" stroke="#5a200c" stroke-width="0.6"/>
<line x1="354.3" y1="184" x2="354.3" y2="213.2" stroke="#ee7c7c" stroke-width="1.3"/>
<line x1="343" y1="184" x2="354.3" y2="184" stroke="#9a9a9a" stroke-width="1"/>
<line x1="348" y1="186" x2="348" y2="207" stroke="#d06868" stroke-width="0.55"/>
<line x1="344.2" y1="190.2" x2="347.2" y2="190.2" stroke="#b4b4bc" stroke-width="0.9"/>
<line x1="349.2" y1="190.2" x2="353.2" y2="190.2" stroke="#86c0de" stroke-width="0.9"/>
<line x1="344.2" y1="191.8" x2="347.2" y2="191.8" stroke="#6a6a72" stroke-width="0.4"/>
<line x1="349.2" y1="191.8" x2="353.2" y2="191.8" stroke="#4a7890" stroke-width="0.4"/>
<line x1="344.2" y1="193.45" x2="347.2" y2="193.45" stroke="#b4b4bc" stroke-width="0.9"/>
<line x1="349.2" y1="193.45" x2="353.2" y2="193.45" stroke="#86c0de" stroke-width="0.9"/>
<line x1="344.2" y1="195.05" x2="347.2" y2="195.05" stroke="#6a6a72" stroke-width="0.4"/>
<line x1="349.2" y1="195.05" x2="353.2" y2="195.05" stroke="#4a7890" stroke-width="0.4"/>
<line x1="344.2" y1="196.7" x2="347.2" y2="196.7" stroke="#b4b4bc" stroke-width="0.9"/>
<line x1="349.2" y1="196.7" x2="353.2" y2="196.7" stroke="#86c0de" stroke-width="0.9"/>
<line x1="344.2" y1="198.3" x2="347.2" y2="198.3" stroke="#6a6a72" stroke-width="0.4"/>
<line x1="349.2" y1="198.3" x2="353.2" y2="198.3" stroke="#4a7890" stroke-width="0.4"/>
<line x1="344.2" y1="199.95" x2="347.2" y2="199.95" stroke="#b4b4bc" stroke-width="0.9"/>
<line x1="349.2" y1="199.95" x2="353.2" y2="199.95" stroke="#86c0de" stroke-width="0.9"/>
<line x1="344.2" y1="201.55" x2="347.2" y2="201.55" stroke="#6a6a72" stroke-width="0.4"/>
<line x1="349.2" y1="201.55" x2="353.2" y2="201.55" stroke="#4a7890" stroke-width="0.4"/>
<line x1="344.2" y1="203.2" x2="347.2" y2="203.2" stroke="#b4b4bc" stroke-width="0.9"/>
<line x1="349.2" y1="203.2" x2="353.2" y2="203.2" stroke="#86c0de" stroke-width="0.9"/>
<line x1="344.2" y1="204.8" x2="347.2" y2="204.8" stroke="#6a6a72" stroke-width="0.4"/>
<line x1="349.2" y1="204.8" x2="353.2" y2="204.8" stroke="#4a7890" stroke-width="0.4"/>
<path d="M344.4 189.6 q0.2 -3.6 3.4 -4.6" fill="none" stroke="#3a66b8" stroke-width="0.5"/>
<line x1="344" y1="208.6" x2="352" y2="208.6" stroke="#8a8a8a" stroke-width="0.5"/>
<rect x="350.8" y="208.6" width="2.4" height="3.4" fill="none" stroke="#d8d030" stroke-width="0.6"/>
<rect x="344" y="213.4" width="9.6" height="8.4" fill="none" stroke="#1c8a6c" stroke-width="0.8"/>
<line x1="344.4" y1="213.8" x2="353.2" y2="221.4" stroke="#9a9a9a" stroke-width="0.45"/>
<line x1="353.2" y1="213.8" x2="344.4" y2="221.4" stroke="#9a9a9a" stroke-width="0.45"/>
<rect x="344" y="220.6" width="9.6" height="1.6" fill="#118362"/>
<rect x="355.2" y="195.4" width="19.4" height="37.6" fill="none" stroke="#9c9c9c" stroke-width="0.9"/>
<line x1="355.2" y1="208.6" x2="374.6" y2="208.6" stroke="#9c9c9c" stroke-width="1.5"/>
<line x1="355.2" y1="233" x2="374.6" y2="233" stroke="#d0d0d0" stroke-width="0.9"/>
<line x1="355" y1="184" x2="362.4" y2="184" stroke="#9a9a9a" stroke-width="0.9"/>
<rect x="362.4" y="183.9" width="12.8" height="11.5" fill="none" stroke="#1c8a6c" stroke-width="0.8"/>
<line x1="363" y1="184.5" x2="374.6" y2="194.8" stroke="#9a9a9a" stroke-width="0.45"/>
<line x1="374.6" y1="184.5" x2="363" y2="194.8" stroke="#9a9a9a" stroke-width="0.45"/>
<rect x="370.2" y="195.6" width="5.4" height="5.8" fill="#062a22" stroke="#1c8a6c" stroke-width="0.8"/>
<circle cx="372.9" cy="198.5" r="1.3" fill="none" stroke="#9adcc8" stroke-width="0.4"/>
<line x1="374.7" y1="184" x2="374.7" y2="190.2" stroke="#ee7c7c" stroke-width="1.2"/>
<line x1="374.7" y1="199.6" x2="374.7" y2="201.6" stroke="#ee7c7c" stroke-width="1.2"/>
<line x1="355.1" y1="228" x2="355.1" y2="233.2" stroke="#ee7c7c" stroke-width="1.2"/>
<line x1="374.7" y1="228" x2="374.7" y2="233.2" stroke="#ee7c7c" stroke-width="1.2"/>
<line x1="358" y1="195.4" x2="362.4" y2="195.4" stroke="#ee7c7c" stroke-width="1"/>
<rect x="273.9" y="167" width="3.8" height="4.8" fill="#0c4a3c" stroke="#22c8a0" stroke-width="0.8"/><rect x="275.3" y="168.5" width="1" height="1.8" fill="#9adcc8"/>
<rect x="318.6" y="167.8" width="3.8" height="4.8" fill="#0c4a3c" stroke="#22c8a0" stroke-width="0.8"/><rect x="320" y="169.3" width="1" height="1.8" fill="#9adcc8"/>
<rect x="356.5" y="167.8" width="3.8" height="4.8" fill="#0c4a3c" stroke="#22c8a0" stroke-width="0.8"/><rect x="357.9" y="169.3" width="1" height="1.8" fill="#9adcc8"/>
<rect x="273.9" y="208.2" width="3.8" height="4.8" fill="#0c4a3c" stroke="#22c8a0" stroke-width="0.8"/><rect x="275.3" y="209.7" width="1" height="1.8" fill="#9adcc8"/>
<rect x="318.2" y="233.2" width="3.8" height="4.8" fill="#0c4a3c" stroke="#22c8a0" stroke-width="0.8"/><rect x="319.6" y="234.7" width="1" height="1.8" fill="#9adcc8"/>
<rect x="384.8" y="167.2" width="4.4" height="4.6" fill="#0c4a3c" stroke="#22c8a0" stroke-width="0.8"/><rect x="386.5" y="168.6" width="1" height="1.8" fill="#9adcc8"/>
<rect x="384.8" y="208.4" width="4.4" height="4.6" fill="#0c4a3c" stroke="#22c8a0" stroke-width="0.8"/><rect x="386.5" y="209.8" width="1" height="1.8" fill="#9adcc8"/>
<rect x="268.9" y="128.2" width="3.2" height="3" fill="#0c4a3c" stroke="#22c8a0" stroke-width="0.6"/>
<rect x="377.8" y="127.2" width="3" height="3.6" fill="#0c4a3c" stroke="#22c8a0" stroke-width="0.6"/>
<rect x="384.2" y="109.8" width="3.8" height="2.6" fill="#0c4a3c" stroke="#22c8a0" stroke-width="0.6"/>
<rect x="356.2" y="234.2" width="2.8" height="4.4" fill="#0c4a3c" stroke="#22c8a0" stroke-width="0.7"/>
<rect x="371" y="234" width="4.4" height="5.8" fill="#0c4a3c" stroke="#22c8a0" stroke-width="0.7"/>
<rect x="293.9" y="162.5" width="8" height="9.9" fill="#041a14" stroke="#1ca888" stroke-width="0.9"/>
<line x1="295.4" y1="164.2" x2="300.4" y2="170.8" stroke="#e0e0e0" stroke-width="0.45"/>
<line x1="300.4" y1="164.2" x2="295.4" y2="170.8" stroke="#e0e0e0" stroke-width="0.45"/>
<circle cx="297.9" cy="165.2" r="0.9" fill="none" stroke="#e0e0e0" stroke-width="0.4"/>
<rect x="296" y="233.6" width="5.4" height="8.4" fill="#041a14" stroke="#1ca888" stroke-width="0.9"/>
<path d="M297.6 235.4 q3.2 2.4 0 5.0" fill="none" stroke="#e0e0e0" stroke-width="0.5"/>
<text x="306" y="161.8" font-size="2" fill="#8a8a8a" textLength="18.6" lengthAdjust="spacingAndGlyphs" class="cad">OPEN YARD AREA</text>
<text x="258" y="199.9" font-size="2" fill="#8a8a8a" textLength="12" lengthAdjust="spacingAndGlyphs" class="cad">BOH AREA</text>
<text x="316.6" y="200.7" font-size="2" fill="#8a8a8a" textLength="10.6" lengthAdjust="spacingAndGlyphs" class="cad">LIFT LOBBY</text>
<text x="302.2" y="230.7" font-size="2" fill="#8a8a8a" textLength="18" lengthAdjust="spacingAndGlyphs" class="cad">OPEN ROOF DECK</text>
<text x="360.6" y="203" font-size="2" fill="#8a8a8a" textLength="5.6" lengthAdjust="spacingAndGlyphs" class="cad">ELEC</text>
<text x="360.6" y="221.6" font-size="2" fill="#8a8a8a" textLength="5.6" lengthAdjust="spacingAndGlyphs" class="cad">ROOM</text>
<text x="393.6" y="129.2" font-size="2" fill="#8a8a8a" textLength="7" lengthAdjust="spacingAndGlyphs" class="cad">PARKING</text>
<text x="395.2" y="172.2" font-size="2" fill="#8a8a8a" textLength="7.4" lengthAdjust="spacingAndGlyphs" class="cad">PARKING</text>
<text x="395.2" y="210.4" font-size="2" fill="#8a8a8a" textLength="7.4" lengthAdjust="spacingAndGlyphs" class="cad">PARKING</text>
<text x="393.6" y="253.7" font-size="2" fill="#8a8a8a" textLength="7" lengthAdjust="spacingAndGlyphs" class="cad">PARKING</text>
<text x="280" y="116.3" font-size="3.0" font-weight="bold" fill="#e4cc64" class="cad" textLength="4.8" lengthAdjust="spacingAndGlyphs" transform="rotate(-8 280 116.3)">29.84</text>
<text x="331.6" y="107.6" font-size="3.0" font-weight="bold" fill="#e4cc64" class="cad" textLength="4.8" lengthAdjust="spacingAndGlyphs" transform="rotate(-30 331.6 107.6)">29.84</text>
<text x="363.6" y="106.6" font-size="3.0" font-weight="bold" fill="#e4cc64" class="cad" textLength="4.8" lengthAdjust="spacingAndGlyphs" transform="rotate(-3 363.6 106.6)">29.84</text>
<text x="414.4" y="106.6" font-size="3.0" font-weight="bold" fill="#e4cc64" class="cad" textLength="4.8" lengthAdjust="spacingAndGlyphs" transform="rotate(3 414.4 106.6)">29.84</text>
<text x="243.6" y="285.6" font-size="3.0" font-weight="bold" fill="#e4cc64" class="cad" textLength="4.8" lengthAdjust="spacingAndGlyphs" transform="rotate(4 243.6 285.6)">29.84</text>
<text x="323.4" y="285.8" font-size="3.0" font-weight="bold" fill="#e4cc64" class="cad" textLength="4.8" lengthAdjust="spacingAndGlyphs" transform="rotate(-3 323.4 285.8)">29.84</text>
<text x="402.4" y="280.2" font-size="3.0" font-weight="bold" fill="#e4cc64" class="cad" textLength="4.8" lengthAdjust="spacingAndGlyphs" transform="rotate(-6 402.4 280.2)">29.84</text>
<text x="441.8" y="194.6" font-size="3.0" font-weight="bold" fill="#e4cc64" class="cad" textLength="5.2" lengthAdjust="spacingAndGlyphs" transform="rotate(-90 441.8 194.6)">53.20</text>
<text x="213.8" y="259.8" font-size="3.0" font-weight="bold" fill="#e4cc64" class="cad" textLength="5.2" lengthAdjust="spacingAndGlyphs" transform="rotate(-90 213.8 259.8)">53.20</text>
<text x="213.8" y="113.8" font-size="2" fill="#1c1cff" textLength="9.6" lengthAdjust="spacingAndGlyphs" class="cad">N=2789316.07</text><text x="212.2" y="117.7" font-size="3" fill="#1c1cff" textLength="12.6" lengthAdjust="spacingAndGlyphs" class="cad" stroke="#1c1cff" stroke-width="0.12">E=498214.52</text>
<text x="310.8" y="101.9" font-size="3" fill="#1c1cff" textLength="12.4" lengthAdjust="spacingAndGlyphs" class="cad" stroke="#1c1cff" stroke-width="0.12">E=498240.11</text><text x="312" y="104.9" font-size="2" fill="#1c1cff" textLength="9.4" lengthAdjust="spacingAndGlyphs" class="cad">N=2789322.65</text>
<text x="342.2" y="99.7" font-size="3" fill="#1c1cff" textLength="11.4" lengthAdjust="spacingAndGlyphs" class="cad" stroke="#1c1cff" stroke-width="0.12">E=498243.90</text><text x="343.4" y="102.7" font-size="2" fill="#1c1cff" textLength="8.4" lengthAdjust="spacingAndGlyphs" class="cad">N=2789322.87</text>
<text x="377.2" y="98.6" font-size="3" fill="#1c1cff" textLength="12.6" lengthAdjust="spacingAndGlyphs" class="cad" stroke="#1c1cff" stroke-width="0.12">E=498263.74</text><text x="378.4" y="101.6" font-size="2" fill="#1c1cff" textLength="9.6" lengthAdjust="spacingAndGlyphs" class="cad">N=2789324.30</text>
<text x="446.4" y="99" font-size="2" fill="#1c1cff" textLength="9.8" lengthAdjust="spacingAndGlyphs" class="cad">N=2789323.51</text><text x="444.8" y="102.9" font-size="3" fill="#1c1cff" textLength="12.8" lengthAdjust="spacingAndGlyphs" class="cad" stroke="#1c1cff" stroke-width="0.12">E=498273.66</text>
<text x="203" y="226.7" font-size="3" fill="#1c1cff" textLength="13" lengthAdjust="spacingAndGlyphs" class="cad" stroke="#1c1cff" stroke-width="0.12">E=498209.35</text><text x="204.2" y="229.7" font-size="2" fill="#1c1cff" textLength="10" lengthAdjust="spacingAndGlyphs" class="cad">N=2789281.44</text>
<text x="195.6" y="281.9" font-size="3" fill="#1c1cff" textLength="12.4" lengthAdjust="spacingAndGlyphs" class="cad" stroke="#1c1cff" stroke-width="0.12">E=498207.12</text><text x="196.8" y="284.9" font-size="2" fill="#1c1cff" textLength="9.4" lengthAdjust="spacingAndGlyphs" class="cad">N=2789263.80</text>
<text x="263.6" y="294.3" font-size="3" fill="#1c1cff" textLength="12.6" lengthAdjust="spacingAndGlyphs" class="cad" stroke="#1c1cff" stroke-width="0.12">E=498228.05</text><text x="264.8" y="297.3" font-size="2" fill="#1c1cff" textLength="9.6" lengthAdjust="spacingAndGlyphs" class="cad">N=2789261.93</text>
<text x="354" y="288.3" font-size="3" fill="#1c1cff" textLength="13" lengthAdjust="spacingAndGlyphs" class="cad" stroke="#1c1cff" stroke-width="0.12">E=498254.49</text><text x="355.2" y="291.3" font-size="2" fill="#1c1cff" textLength="10" lengthAdjust="spacingAndGlyphs" class="cad">N=2789262.88</text>
<text x="443.2" y="276.6" font-size="3" fill="#1c1cff" textLength="12" lengthAdjust="spacingAndGlyphs" class="cad" stroke="#1c1cff" stroke-width="0.12">E=498273.01</text><text x="444.4" y="279.6" font-size="2" fill="#1c1cff" textLength="9" lengthAdjust="spacingAndGlyphs" class="cad">N=2789266.72</text>
<line x1="409.5" y1="71.5" x2="409.5" y2="347.6" stroke="#9a9a9a" stroke-width="0.7"/>
<line x1="273" y1="220.8" x2="546" y2="220.8" stroke="#8c8c8c" stroke-width="0.7"/>
<rect x="406.1" y="217.4" width="6.8" height="7" fill="none" stroke="#b4b4b4" stroke-width="0.5"/>
</g>
<g id="panels">
<line x1="8.7" y1="47.6" x2="8.7" y2="210" stroke="#dadada" stroke-width="0.4"/>
<line x1="17.6" y1="47.6" x2="17.6" y2="292" stroke="#dadada" stroke-width="0.4"/>
<line x1="26.6" y1="47.6" x2="26.6" y2="292" stroke="#e2e2e2" stroke-width="0.4"/>
<line x1="1" y1="48.4" x2="7.4" y2="48.4" stroke="#c0c0c0" stroke-width="0.45"/><line x1="1" y1="50" x2="7.4" y2="50" stroke="#c8c8c8" stroke-width="0.4"/>
<line x1="10" y1="48.4" x2="16.4" y2="48.4" stroke="#c0c0c0" stroke-width="0.45"/><line x1="10" y1="50" x2="16.4" y2="50" stroke="#c8c8c8" stroke-width="0.4"/>
<line x1="18.8" y1="48.4" x2="25.2" y2="48.4" stroke="#c0c0c0" stroke-width="0.45"/><line x1="18.8" y1="50" x2="25.2" y2="50" stroke="#c8c8c8" stroke-width="0.4"/>
<line x1="2.1" y1="57.3" x2="6.3" y2="53.1" stroke="#2a2a33" stroke-width="0.7"/><rect x="1.6" y="56.7" width="1.2" height="1.2" fill="#3a7ad8"/><rect x="5.7" y="52.5" width="1.2" height="1.2" fill="#3a7ad8"/>
<line x1="1.7" y1="65.84" x2="6.7" y2="60.84" stroke="#2a2a33" stroke-width="0.9"/>
<path d="M1.9 72.78 h3.4 a1.2 1.2 0 0 0 0 -2.4" fill="none" stroke="#2a2a33" stroke-width="0.7"/><rect x="1.6" y="72.18" width="1.2" height="1.2" fill="#3a7ad8"/>
<polygon points="4.1,77.42 6.3,79.12 5.5,81.72 2.7,81.72 1.9,79.12" fill="none" stroke="#2a2a33" stroke-width="0.7"/>
<rect x="2" y="86.26" width="4.4" height="3" fill="none" stroke="#2a2a33" stroke-width="0.7"/><rect x="5.7" y="85.66" width="1.2" height="1.2" fill="#3a7ad8"/>
<path d="M2.1 98 q0.4 -3.8 4.2 -4.0" fill="none" stroke="#2a2a33" stroke-width="0.8"/>
<circle cx="4.1" cy="104.04" r="2.1" fill="none" stroke="#2a2a33" stroke-width="0.7"/><line x1="4.1" y1="104.04" x2="5.6" y2="102.54" stroke="#2a2a33" stroke-width="0.5"/>
<path d="M1.9 112.68 q1.4 -2.6 2.6 -0.2 t2.0 -2.2 q-0.4 2.8 -2.2 3.2 z" fill="none" stroke="#2a2a33" stroke-width="0.6"/>
<path d="M1.9 121.82 q1.2 -3.2 2.4 -1.2 t2.2 -1.4" fill="none" stroke="#2a2a33" stroke-width="0.7"/>
<ellipse cx="4.1" cy="128.46" rx="2.3" ry="1.3" fill="none" stroke="#2a2a33" stroke-width="0.7"/>
<path d="M1.9 136.6 a2.3 1.3 0 1 1 2.0 1.2" fill="none" stroke="#2a2a33" stroke-width="0.7"/><rect x="1.5" y="136.1" width="1.2" height="1.2" fill="#3a7ad8"/>
<rect x="2.1" y="142.84" width="2.6" height="2.4" fill="#9fc0ea" stroke="#3a62a8" stroke-width="0.5"/><rect x="3.9" y="144.64" width="2.4" height="2.2" fill="#e3c050" stroke="#8c7430" stroke-width="0.4"/>
<rect x="2.1" y="151.18" width="2.8" height="2.6" fill="#7fb078" stroke="#3f7040" stroke-width="0.5"/><rect x="4.3" y="152.98" width="2" height="2" fill="#9fc0ea" stroke="#3a62a8" stroke-width="0.4"/>
<rect x="3.5" y="160.52" width="1.2" height="1.2" fill="#2a2a33"/>
<rect x="1.9" y="166.86" width="4.6" height="4.6" fill="none" stroke="#2a2a33" stroke-width="0.5"/><line x1="1.9" y1="168.86" x2="3.9" y2="166.86" stroke="#3a7ad8" stroke-width="0.5"/><line x1="1.9" y1="170.06" x2="5.1" y2="166.86" stroke="#3a7ad8" stroke-width="0.5"/><line x1="1.9" y1="171.26" x2="6.3" y2="166.86" stroke="#3a7ad8" stroke-width="0.5"/>
<rect x="1.9" y="175" width="4.6" height="4.6" fill="#2a2a33"/><rect x="3.1" y="176.2" width="2.2" height="2.2" fill="#8090b0"/>
<rect x="1.9" y="183.54" width="4.4" height="3.8" fill="#c8dcf4" stroke="#3a62a8" stroke-width="0.6"/><circle cx="4.1" cy="185.44" r="1.2" fill="#6f9bd8"/>
<rect x="1.9" y="191.48" width="4.6" height="4.2" fill="#eef4fb" stroke="#3a62a8" stroke-width="0.6"/><line x1="1.9" y1="192.88" x2="6.5" y2="192.88" stroke="#3a62a8" stroke-width="0.5"/><line x1="3.5" y1="191.48" x2="3.5" y2="195.68" stroke="#3a62a8" stroke-width="0.5"/>
<polyline points="2.1,204.02 4.1,199.42 6.1,204.02" fill="none" stroke="#1a1a22" stroke-width="0.9"/><line x1="2.9" y1="202.42" x2="5.3" y2="202.42" stroke="#1a1a22" stroke-width="0.7"/>
<rect x="12.4" y="54.7" width="2.6" height="2.6" fill="#7aa8e4" stroke="#3f68b0" stroke-width="0.35"/><line x1="12.4" y1="54.7" x2="15" y2="54.7" stroke="#dcebfb" stroke-width="0.4"/><line x1="11.8" y1="52.9" x2="11.8" y2="55.1" stroke="#3fa04a" stroke-width="0.7"/><polyline points="11,53.7 11.8,52.7 12.6,53.7" fill="none" stroke="#3fa04a" stroke-width="0.5"/>
<rect x="12.2" y="62" width="2.8" height="2.8" fill="#6f9fe0" stroke="#3f68b0" stroke-width="0.35"/><line x1="12.2" y1="62" x2="15" y2="62" stroke="#dcebfb" stroke-width="0.4"/><path d="M11 63 a2.4 2.4 0 0 1 4.4 0" fill="none" stroke="#4a74b8" stroke-width="0.6"/>
<rect x="11.6" y="69.1" width="2.6" height="2.6" fill="#7aa8e4" stroke="#3f68b0" stroke-width="0.35"/><line x1="11.6" y1="69.1" x2="14.2" y2="69.1" stroke="#dcebfb" stroke-width="0.4"/><rect x="11.2" y="71.5" width="3.4" height="2" fill="#e8d040"/><rect x="14.2" y="72.1" width="1.6" height="1.6" fill="#3f68b0"/>
<rect x="11.6" y="77.2" width="2.6" height="2.6" fill="#7aa8e4" stroke="#3f68b0" stroke-width="0.35"/><line x1="11.6" y1="77.2" x2="14.2" y2="77.2" stroke="#dcebfb" stroke-width="0.4"/><rect x="11.2" y="79.6" width="3.4" height="2" fill="#e8d040"/><rect x="14.2" y="80.2" width="1.6" height="1.6" fill="#3f68b0"/>
<rect x="12" y="85.1" width="2.2" height="2.2" fill="#58a860" stroke="#3f68b0" stroke-width="0.35"/><line x1="12" y1="85.1" x2="14.2" y2="85.1" stroke="#dcebfb" stroke-width="0.4"/><rect x="12" y="87.9" width="2.2" height="2.2" fill="#7aa8e4" stroke="#3f68b0" stroke-width="0.35"/><line x1="12" y1="87.9" x2="14.2" y2="87.9" stroke="#dcebfb" stroke-width="0.4"/>
<rect x="11" y="94.8" width="2.4" height="2.4" fill="#7aa8e4" stroke="#3f68b0" stroke-width="0.35"/><line x1="11" y1="94.8" x2="13.4" y2="94.8" stroke="#dcebfb" stroke-width="0.4"/><rect x="13" y="93.6" width="2.4" height="2.4" fill="#9cc0ee" stroke="#3f68b0" stroke-width="0.35"/><line x1="13" y1="93.6" x2="15.4" y2="93.6" stroke="#dcebfb" stroke-width="0.4"/>
<rect x="11.4" y="101.7" width="2.2" height="2.2" fill="#9cc0ee" stroke="#3f68b0" stroke-width="0.35"/><line x1="11.4" y1="101.7" x2="13.6" y2="101.7" stroke="#dcebfb" stroke-width="0.4"/><rect x="12.8" y="103.7" width="2.2" height="2.2" fill="#7aa8e4" stroke="#3f68b0" stroke-width="0.35"/><line x1="12.8" y1="103.7" x2="15" y2="103.7" stroke="#dcebfb" stroke-width="0.4"/>
<rect x="11.2" y="111.6" width="2.4" height="2.4" fill="#9cc0ee" stroke="#3f68b0" stroke-width="0.35"/><line x1="11.2" y1="111.6" x2="13.6" y2="111.6" stroke="#dcebfb" stroke-width="0.4"/><line x1="11.6" y1="114" x2="15.4" y2="109.8" stroke="#d04848" stroke-width="0.8"/>
<rect x="11.2" y="117.9" width="2.4" height="2.4" fill="#7aa8e4" stroke="#3f68b0" stroke-width="0.35"/><line x1="11.2" y1="117.9" x2="13.6" y2="117.9" stroke="#dcebfb" stroke-width="0.4"/><line x1="12.2" y1="122.1" x2="15.4" y2="118.9" stroke="#4a74b8" stroke-width="0.7"/><rect x="14" y="120.7" width="1.6" height="1.6" fill="#58a860"/>
<rect x="11.6" y="125.8" width="2.4" height="2.4" fill="#7aa8e4" stroke="#3f68b0" stroke-width="0.35"/><line x1="11.6" y1="125.8" x2="14" y2="125.8" stroke="#dcebfb" stroke-width="0.4"/><rect x="11.4" y="128.4" width="3" height="1.8" fill="#e8d040"/><rect x="13.8" y="128" width="1.8" height="1.8" fill="#3f68b0"/>
<line x1="10" y1="137.4" x2="16.4" y2="137.4" stroke="#c0c0c0" stroke-width="0.45"/><line x1="10" y1="139" x2="16.4" y2="139" stroke="#c8c8c8" stroke-width="0.4"/>
<rect x="10.8" y="142.6" width="4.8" height="5.2" fill="#f6f9fd" stroke="#5a84c4" stroke-width="0.5"/>
<rect x="11.6" y="145" width="3.2" height="2" fill="#6f9fe0"/>
<rect x="11.1" y="154.1" width="3.3" height="3.4" fill="#8fb6ea" stroke="#4a74b8" stroke-width="0.45"/><polygon points="11.1,154.1 12.4,152.8 15.7,152.8 14.4,154.1" fill="#8fb6ea" stroke="#4a74b8" stroke-width="0.4"/><polygon points="14.4,154.1 15.7,152.8 15.7,156.2 14.4,157.5" fill="#dce9fa" stroke="#4a74b8" stroke-width="0.4"/>
<rect x="11.1" y="162.3" width="3.3" height="3.4" fill="#f4f8fd" stroke="#4a74b8" stroke-width="0.45"/><polygon points="11.1,162.3 12.4,161 15.7,161 14.4,162.3" fill="#e4eefb" stroke="#4a74b8" stroke-width="0.4"/><polygon points="14.4,162.3 15.7,161 15.7,164.4 14.4,165.7" fill="#6f9fe0" stroke="#4a74b8" stroke-width="0.4"/>
<rect x="11.1" y="170.3" width="3.3" height="3.4" fill="#a8c8f2" stroke="#4a74b8" stroke-width="0.45"/><polygon points="11.1,170.3 12.4,169 15.7,169 14.4,170.3" fill="#e4eefb" stroke="#4a74b8" stroke-width="0.4"/><polygon points="14.4,170.3 15.7,169 15.7,172.4 14.4,173.7" fill="#dce9fa" stroke="#4a74b8" stroke-width="0.4"/>
<rect x="11.1" y="179.1" width="3.3" height="3.4" fill="#f4f8fd" stroke="#4a74b8" stroke-width="0.45"/><polygon points="11.1,179.1 12.4,177.8 15.7,177.8 14.4,179.1" fill="#5a8ad4" stroke="#4a74b8" stroke-width="0.4"/><polygon points="14.4,179.1 15.7,177.8 15.7,181.2 14.4,182.5" fill="#5a8ad4" stroke="#4a74b8" stroke-width="0.4"/>
<rect x="11.1" y="187.1" width="3.3" height="3.4" fill="#b8d4f6" stroke="#4a74b8" stroke-width="0.45"/><polygon points="11.1,187.1 12.4,185.8 15.7,185.8 14.4,187.1" fill="#e4eefb" stroke="#4a74b8" stroke-width="0.4"/><polygon points="14.4,187.1 15.7,185.8 15.7,189.2 14.4,190.5" fill="#dce9fa" stroke="#4a74b8" stroke-width="0.4"/>
<rect x="11.1" y="195.3" width="3.3" height="3.4" fill="#f4f8fd" stroke="#4a74b8" stroke-width="0.45"/><polygon points="11.1,195.3 12.4,194 15.7,194 14.4,195.3" fill="#e4eefb" stroke="#4a74b8" stroke-width="0.4"/><polygon points="14.4,195.3 15.7,194 15.7,197.4 14.4,198.7" fill="#7aa8e4" stroke="#4a74b8" stroke-width="0.4"/>
<polygon points="13.2,203.6 15.4,205.6 13.2,208.8 11,205.6" fill="#6f9fe0" stroke="#4a74b8" stroke-width="0.4"/><polygon points="13.2,203.6 15.4,205.6 13.2,206.4" fill="#dcebfb" stroke="#4a74b8" stroke-width="0.3"/>
<polygon points="13.2,212.8 15.4,214.8 13.2,218 11,214.8" fill="#5a8ad4" stroke="#4a74b8" stroke-width="0.4"/><polygon points="13.2,212.8 15.4,214.8 13.2,215.6" fill="#dcebfb" stroke="#4a74b8" stroke-width="0.3"/>
<polygon points="13.2,221.4 15.4,223.4 13.2,226.6 11,223.4" fill="#7aa8e4" stroke="#4a74b8" stroke-width="0.4"/><polygon points="13.2,221.4 15.4,223.4 13.2,224.2" fill="#dcebfb" stroke="#4a74b8" stroke-width="0.3"/>
<polygon points="13.2,229.6 15.4,231.6 13.2,234.8 11,231.6" fill="#6f9fe0" stroke="#4a74b8" stroke-width="0.4"/><polygon points="13.2,229.6 15.4,231.6 13.2,232.4" fill="#dcebfb" stroke="#4a74b8" stroke-width="0.3"/>
<line x1="10" y1="237.2" x2="16.4" y2="237.2" stroke="#c0c0c0" stroke-width="0.45"/><line x1="10" y1="238.8" x2="16.4" y2="238.8" stroke="#c8c8c8" stroke-width="0.4"/>
<rect x="10.8" y="241.2" width="4.8" height="3.4" fill="#3f5f98"/>
<circle cx="13.2" cy="243" r="1" fill="#cfe0f8"/>
<rect x="11.6" y="240.4" width="1.6" height="0.9" fill="#3f5f98"/>
<circle cx="13.2" cy="252.2" r="2" fill="#cfe1f7" stroke="#8fb6ea" stroke-width="0.5"/>
<circle cx="13.2" cy="252.2" r="0.8" fill="#8fb6ea"/>
<line x1="10" y1="258.4" x2="16.4" y2="258.4" stroke="#c0c0c0" stroke-width="0.45"/><line x1="10" y1="260" x2="16.4" y2="260" stroke="#c8c8c8" stroke-width="0.4"/>
<polygon points="13.2,264.4 15.4,268.8 11,268.8" fill="#8fb6ea" stroke="#4a74b8" stroke-width="0.4"/>
<rect x="11.2" y="268" width="2" height="1.4" fill="#58a860"/>
<ellipse cx="13.2" cy="275.2" rx="2.2" ry="1.4" fill="#b8d4f6" stroke="#4a74b8" stroke-width="0.4"/>
<rect x="11" y="273" width="2.2" height="1.6" fill="#dce9fa" stroke="#4a74b8" stroke-width="0.3"/>
<line x1="11" y1="286.2" x2="15.2" y2="282" stroke="#58a860" stroke-width="1"/>
<rect x="13.6" y="281.2" width="2.2" height="2.2" fill="#e8b838"/>
<rect x="10.6" y="284.6" width="2" height="2" fill="#4a74c8"/>
<polygon points="20.8,57.3 20.8,53.9 22.6,52.9 22.6,56.3" fill="#c4dbf6" stroke="#4a74b8" stroke-width="0.4"/><polygon points="22.6,52.9 23.8,53.7 23.8,57.1 22.6,56.3" fill="#8fb6ea" stroke="#4a74b8" stroke-width="0.4"/>
<rect x="20" y="62.2" width="3.2" height="3.4" fill="#d4e4f8" stroke="#4a74b8" stroke-width="0.45"/><polygon points="20,62.2 21.2,61 24.4,61 23.2,62.2" fill="#eef5fd" stroke="#4a74b8" stroke-width="0.4"/><polygon points="23.2,62.2 24.4,61 24.4,64.4 23.2,65.6" fill="#6f9fe0" stroke="#4a74b8" stroke-width="0.4"/>
<polygon points="20,73.5 20,69.7 23,73.5" fill="#d4e4f8" stroke="#4a74b8" stroke-width="0.45"/><polygon points="20,69.7 21.4,68.9 24.4,72.5 23,73.5" fill="#a8c8f2" stroke="#4a74b8" stroke-width="0.4"/>
<polygon points="22,77.1 24,81.2 20,81.2" fill="#cfe1f7" stroke="#4a74b8" stroke-width="0.45"/><ellipse cx="22" cy="81.2" rx="2.0" ry="0.7" fill="#5a8ad4" stroke="#4a74b8" stroke-width="0.35"/>
<circle cx="22" cy="87.6" r="2.2" fill="#b8d4f6" stroke="#4a74b8" stroke-width="0.4"/><circle cx="21.3" cy="86.9" r="1" fill="#eaf3fd"/>
<rect x="20.4" y="94" width="3.2" height="3.6" fill="#cfe1f7" stroke="#4a74b8" stroke-width="0.45"/><ellipse cx="22" cy="94" rx="1.6" ry="0.7" fill="#eef5fd" stroke="#4a74b8" stroke-width="0.35"/><ellipse cx="22" cy="97.6" rx="1.6" ry="0.7" fill="#7aa8e4" stroke="#4a74b8" stroke-width="0.35"/>
<ellipse cx="22" cy="103.8" rx="2.3" ry="1.5" fill="none" stroke="#8fb6ea" stroke-width="1.1"/><ellipse cx="22" cy="103.8" rx="2.3" ry="1.5" fill="none" stroke="#4a74b8" stroke-width="0.3"/>
<polygon points="22,109.5 24.2,113.2 21.6,114.2 19.8,113" fill="#6f9fe0" stroke="#4a74b8" stroke-width="0.4"/><line x1="22" y1="109.5" x2="21.6" y2="114.2" stroke="#eaf3fd" stroke-width="0.4"/>
<path d="M19.9 120.9 q2.6 -1.4 4.2 0 q-2.2 1.2 -4.2 0.2 q2.6 -1.4 4.2 0" fill="none" stroke="#5a8ad4" stroke-width="0.6"/><line x1="20.2" y1="118.9" x2="23.8" y2="118.1" stroke="#5a8ad4" stroke-width="0.6"/>
<polygon points="19.8,128.8 21.6,126.4 24.4,127.2 22.6,129.8" fill="#c4dbf6" stroke="#4a74b8" stroke-width="0.4"/>
<line x1="18.8" y1="133" x2="25.4" y2="133" stroke="#c0c0c0" stroke-width="0.45"/><line x1="18.8" y1="134.6" x2="25.4" y2="134.6" stroke="#c8c8c8" stroke-width="0.4"/>
<rect x="19.8" y="137" width="4.4" height="4.6" fill="#eef4fb" stroke="#2a2f3c" stroke-width="0.7"/>
<rect x="21.4" y="136.4" width="3.2" height="2.4" fill="#4a74c8"/>
<polygon points="22,144.8 24,148.9 20,148.9" fill="#cfe1f7" stroke="#4a74b8" stroke-width="0.45"/><ellipse cx="22" cy="148.9" rx="2.0" ry="0.7" fill="#5a8ad4" stroke="#4a74b8" stroke-width="0.35"/>
<path d="M19.9 156.1 q2.6 -1.4 4.2 0 q-2.2 1.2 -4.2 0.2 q2.6 -1.4 4.2 0" fill="none" stroke="#5a8ad4" stroke-width="0.6"/><line x1="20.2" y1="154.1" x2="23.8" y2="153.3" stroke="#5a8ad4" stroke-width="0.6"/>
<polygon points="22,160.8 24.2,164.5 21.6,165.5 19.8,164.3" fill="#6f9fe0" stroke="#4a74b8" stroke-width="0.4"/><line x1="22" y1="160.8" x2="21.6" y2="165.5" stroke="#eaf3fd" stroke-width="0.4"/>
<polygon points="20.8,173.3 20.8,169.9 22.6,168.9 22.6,172.3" fill="#c4dbf6" stroke="#4a74b8" stroke-width="0.4"/><polygon points="22.6,168.9 23.8,169.7 23.8,173.1 22.6,172.3" fill="#8fb6ea" stroke="#4a74b8" stroke-width="0.4"/>
<ellipse cx="22" cy="183" rx="2.4" ry="1.7" fill="#e4eefb" stroke="#4a74b8" stroke-width="0.6"/><line x1="22" y1="181.3" x2="22" y2="184.7" stroke="#4a74b8" stroke-width="0.4"/>
<ellipse cx="22" cy="190.6" rx="2.4" ry="1.7" fill="#e4eefb" stroke="#4a74b8" stroke-width="0.6"/><ellipse cx="22" cy="190.6" rx="1.0" ry="1.7" fill="none" stroke="#4a74b8" stroke-width="0.4"/>
<ellipse cx="22" cy="198.4" rx="2.4" ry="1.7" fill="#e4eefb" stroke="#4a74b8" stroke-width="0.6"/><line x1="19.6" y1="198.4" x2="24.4" y2="198.4" stroke="#4a74b8" stroke-width="0.4"/><line x1="22" y1="196.7" x2="22" y2="200.1" stroke="#4a74b8" stroke-width="0.4"/>
<line x1="20.4" y1="210" x2="20.4" y2="205" stroke="#333" stroke-width="0.6"/>
<line x1="20.4" y1="210" x2="24.6" y2="210" stroke="#333" stroke-width="0.6"/>
<rect x="21.4" y="206" width="1.6" height="1.6" fill="#d04040"/>
<circle cx="23.6" cy="205.6" r="0.8" fill="#4a74c8"/>
<circle cx="22" cy="216.2" r="2.2" fill="#dce9fa" stroke="#c05050" stroke-width="0.5"/>
<line x1="19.8" y1="216.2" x2="24.2" y2="216.2" stroke="#4a74c8" stroke-width="0.5"/>
<line x1="22" y1="214" x2="22" y2="218.4" stroke="#4a74c8" stroke-width="0.5"/>
<rect x="19.8" y="222.6" width="2" height="2" fill="none" stroke="#333" stroke-width="0.5"/>
<rect x="22.4" y="222.6" width="2" height="2" fill="#4a74c8"/>
<rect x="19.8" y="225.4" width="2" height="2" fill="#667"/>
<line x1="18.8" y1="230.6" x2="25.4" y2="230.6" stroke="#c0c0c0" stroke-width="0.45"/><line x1="18.8" y1="232.2" x2="25.4" y2="232.2" stroke="#c8c8c8" stroke-width="0.4"/>
<rect x="19.8" y="236.6" width="4.6" height="4.8" fill="#fbfbfb" stroke="#2a2a33" stroke-width="0.7"/>
<rect x="19.4" y="240" width="1.8" height="1.6" fill="#2a2a33"/>
<line x1="18.8" y1="245" x2="25.4" y2="245" stroke="#c0c0c0" stroke-width="0.45"/><line x1="18.8" y1="246.6" x2="25.4" y2="246.6" stroke="#c8c8c8" stroke-width="0.4"/>
<rect x="20" y="249.5" width="3.2" height="3.3" fill="#fafafa" stroke="#2a2a33" stroke-width="0.5"/>
<polyline points="20,249.5 21.4,248.2 24.4,248.2 24.4,251.5 23.2,252.8" fill="none" stroke="#2a2a33" stroke-width="0.5"/>
<circle cx="22" cy="258.4" r="2.3" fill="#fafafa" stroke="#2a2a33" stroke-width="0.55"/>
<line x1="20.2" y1="257.2" x2="23.6" y2="257" stroke="#2a2a33" stroke-width="0.4"/>
<circle cx="22" cy="266.4" r="2.3" fill="#3f78d0" stroke="#2a4f98" stroke-width="0.4"/>
<circle cx="21.3" cy="265.6" r="1" fill="#a8c8f0"/>
<circle cx="22" cy="274.6" r="2.3" fill="#e08a30" stroke="#4a3a88" stroke-width="0.4"/>
<circle cx="22.4" cy="275.4" r="1.3" fill="#5a4ab0"/>
<rect x="19.8" y="281.8" width="3.6" height="3.8" fill="#6f9fe0" stroke="#2f5598" stroke-width="0.4"/>
<rect x="21" y="283" width="3.4" height="3.4" fill="#9cc2f0" stroke="#2f5598" stroke-width="0.4"/>
<rect x="640.2" y="47.2" width="2.2" height="300.4" fill="#f6f6f6"/>
<line x1="642.6" y1="47.2" x2="642.6" y2="347.6" stroke="#dedede" stroke-width="0.4"/>
<line x1="643" y1="48.6" x2="649.4" y2="48.6" stroke="#c0c0c0" stroke-width="0.45"/><line x1="643" y1="50.2" x2="649.4" y2="50.2" stroke="#c8c8c8" stroke-width="0.4"/>
<line x1="644.2" y1="57.3" x2="648.2" y2="53.3" stroke="#d8a030" stroke-width="1.1"/><rect x="643.8" y="56.5" width="2" height="1.2" fill="#d05050"/><line x1="644" y1="57.7" x2="648.4" y2="57.7" stroke="#555" stroke-width="0.4"/>
<circle cx="645.4" cy="62.46" r="1.3" fill="#9fc0ea" stroke="#3a72cc" stroke-width="0.5"/><circle cx="647" cy="64.26" r="1.3" fill="#9fc0ea" stroke="#444" stroke-width="0.5"/>
<polygon points="644,73.42 645.8,69.62 645.8,73.42" fill="#9a9aa8" stroke="#2a2a33" stroke-width="0.5"/><polygon points="648.4,73.42 646.6,69.62 646.6,73.42" fill="#9fc0ea" stroke="#2a2a33" stroke-width="0.5"/><line x1="646.2" y1="68.62" x2="646.2" y2="74.02" stroke="#3a72cc" stroke-width="0.5"/>
<polygon points="644,81.48 645.8,77.68 645.8,81.48" fill="#9a9aa8" stroke="#2a2a33" stroke-width="0.5"/><polygon points="648.4,81.48 646.6,77.68 646.6,81.48" fill="#9fc0ea" stroke="#2a2a33" stroke-width="0.5"/><line x1="646.2" y1="76.68" x2="646.2" y2="82.08" stroke="#3a72cc" stroke-width="0.5"/>
<rect x="644.2" y="85.34" width="1.6" height="1.6" fill="none" stroke="#2a2a33" stroke-width="0.5"/><rect x="644.2" y="87.74" width="1.6" height="1.6" fill="none" stroke="#2a2a33" stroke-width="0.5"/><rect x="646.6" y="85.34" width="1.6" height="1.6" fill="none" stroke="#2a2a33" stroke-width="0.5"/><rect x="646.6" y="87.74" width="1.6" height="1.6" fill="none" stroke="#2a2a33" stroke-width="0.5"/>
<line x1="646.2" y1="93" x2="646.2" y2="98" stroke="#3a72cc" stroke-width="0.8"/><line x1="643.8" y1="95.5" x2="648.6" y2="95.5" stroke="#3a72cc" stroke-width="0.8"/>
<path d="M648.2 103.96 a2 2 0 1 1 -1.6 -1.6" fill="none" stroke="#3a72cc" stroke-width="0.8"/>
<rect x="644.2" y="109.52" width="4" height="4" fill="none" stroke="#8a94a8" stroke-width="0.5"/><rect x="645.4" y="110.72" width="1.8" height="1.8" fill="#9fc0ea"/>
<rect x="644.2" y="117.58" width="2.8" height="3.4" fill="#c8dcf4" stroke="#5a78a8" stroke-width="0.5"/><rect x="645.6" y="119.18" width="2.8" height="2.8" fill="#dfeaf8" stroke="#5a78a8" stroke-width="0.5"/>
<line x1="644" y1="127.74" x2="648.6" y2="127.74" stroke="#3a72cc" stroke-width="0.6"/><line x1="645.6" y1="125.44" x2="645.6" y2="130.04" stroke="#8a94a8" stroke-width="0.5"/>
<line x1="644" y1="136.2" x2="646.6" y2="136.2" stroke="#3a72cc" stroke-width="0.6"/><line x1="647" y1="133.5" x2="647" y2="138.1" stroke="#8a94a8" stroke-width="0.5"/><line x1="646.6" y1="136.2" x2="648.4" y2="134.6" stroke="#777" stroke-width="0.5"/>
<rect x="644.3" y="141.96" width="3.8" height="3.8" fill="none" stroke="#2a2a33" stroke-width="0.7"/>
<rect x="644.3" y="150.02" width="3.8" height="3.8" fill="none" stroke="#2a2a33" stroke-width="0.7"/><rect x="647.2" y="151.22" width="1.4" height="1.4" fill="#f0f0f0"/>
<line x1="644" y1="159.98" x2="645.6" y2="159.98" stroke="#2a2a33" stroke-width="0.9"/><line x1="646.8" y1="159.98" x2="648.4" y2="159.98" stroke="#2a2a33" stroke-width="0.9"/>
<path d="M644.4 170.34 v-2.4 q0.2 -2.0 2.6 -2.0 h1.0" fill="none" stroke="#2f5fa8" stroke-width="0.8"/>
<path d="M644.4 178.4 v-2.4 q0.2 -2.0 2.6 -2.0 h1.0" fill="none" stroke="#2f5fa8" stroke-width="0.8"/>
<line x1="644.4" y1="186.06" x2="648" y2="182.26" stroke="#d8a030" stroke-width="1"/><rect x="643.8" y="184.66" width="2" height="2" fill="#d04848"/><rect x="647" y="181.66" width="1.6" height="1.6" fill="#e8c840"/>
<rect x="644.4" y="190.32" width="3.6" height="3.8" fill="#6f9fe0" stroke="#2f5598" stroke-width="0.4"/><rect x="645.2" y="191.12" width="1.8" height="1.6" fill="#dcebfb"/>
<rect x="644.4" y="198.38" width="3.6" height="3.8" fill="#3f70c0" stroke="#2f5598" stroke-width="0.4"/><rect x="645.2" y="199.18" width="1.8" height="1.6" fill="#dcebfb"/>
<rect x="644.4" y="206.44" width="3.6" height="3.8" fill="#88b4ea" stroke="#2f5598" stroke-width="0.4"/><rect x="645.2" y="207.24" width="1.8" height="1.6" fill="#dcebfb"/>
<rect x="644.4" y="214.5" width="3.6" height="3.8" fill="#4f86d6" stroke="#2f5598" stroke-width="0.4"/><rect x="645.2" y="215.3" width="1.8" height="1.6" fill="#dcebfb"/>
<rect x="644.4" y="222.56" width="3.6" height="3.8" fill="#6f9fe0" stroke="#2f5598" stroke-width="0.4"/><rect x="645.2" y="223.36" width="1.8" height="1.6" fill="#dcebfb"/>
<rect x="27" y="347.8" width="623" height="6.4" fill="#f0f0f0"/>
<rect x="27.6" y="348.3" width="5.4" height="5" fill="#f4f4f4" stroke="#c2c2c2" stroke-width="0.4"/>
<polygon points="31.2,349.5 29.6,350.8 31.2,352.1" fill="#222" stroke="#222" stroke-width="0.2"/>
<line x1="29.2" y1="349.5" x2="29.2" y2="352.1" stroke="#222" stroke-width="0.5"/>
<rect x="33.6" y="348.3" width="5.4" height="5" fill="#f4f4f4" stroke="#c2c2c2" stroke-width="0.4"/>
<polygon points="37.2,349.5 35.6,350.8 37.2,352.1" fill="#222" stroke="#222" stroke-width="0.2"/>
<rect x="39.6" y="348.3" width="5.4" height="5" fill="#f4f4f4" stroke="#c2c2c2" stroke-width="0.4"/>
<polygon points="41.4,349.5 43,350.8 41.4,352.1" fill="#222" stroke="#222" stroke-width="0.2"/>
<rect x="45.6" y="348.3" width="5.4" height="5" fill="#f4f4f4" stroke="#c2c2c2" stroke-width="0.4"/>
<polygon points="47.4,349.5 49,350.8 47.4,352.1" fill="#222" stroke="#222" stroke-width="0.2"/>
<line x1="49.4" y1="349.5" x2="49.4" y2="352.1" stroke="#222" stroke-width="0.5"/>
<polygon points="52.2,347.8 66.8,347.8 65.6,353 53.4,353" fill="#000" stroke="#000" stroke-width="0.3"/>
<text x="54.6" y="352" font-size="4.3" fill="#f4f4f4" textLength="9.8" lengthAdjust="spacingAndGlyphs" class="ui">Model</text>
<polygon points="67.4,348 84.8,348 83.6,353.2 68.6,353.2" fill="#fafafa" stroke="#555" stroke-width="0.45"/>
<text x="69.6" y="352" font-size="4.3" fill="#222" textLength="12.6" lengthAdjust="spacingAndGlyphs" class="ui">Layout1</text>
<rect x="0" y="354.2" width="650" height="1.2" fill="#e4e4e4"/>
<rect x="0" y="355.4" width="650" height="1" fill="#cfcfcf"/>
<rect x="0" y="356.4" width="650" height="0.8" fill="#e2e2e2"/>
<line x1="2.2" y1="359.6" x2="2.2" y2="375.4" stroke="#c4c4c4" stroke-width="0.45"/>
<line x1="3.4" y1="359.6" x2="3.4" y2="375.4" stroke="#dcdcdc" stroke-width="0.4"/>
<rect x="5.6" y="360.2" width="642" height="15.6" fill="#ffffff" stroke="#d6d6d6" stroke-width="0.4"/>
<line x1="5.6" y1="360.2" x2="647.6" y2="360.2" stroke="#a4a4a4" stroke-width="0.5"/>
<line x1="5.6" y1="360.2" x2="5.6" y2="375.8" stroke="#a4a4a4" stroke-width="0.5"/>
<line x1="5.6" y1="369.3" x2="641.2" y2="369.3" stroke="#d0d0d0" stroke-width="0.5"/>
<text x="6.8" y="364.9" font-size="5" fill="#585858" textLength="40.2" lengthAdjust="spacingAndGlyphs" class="mono">Command: *Cancel*</text>
<text x="6.8" y="374.2" font-size="5" fill="#585858" textLength="18.6" lengthAdjust="spacingAndGlyphs" class="mono">Command:</text>
<line x1="27.6" y1="370.4" x2="27.6" y2="375" stroke="#222" stroke-width="0.5"/>
<polyline points="643.2,363.4 644.4,362.2 645.6,363.4" fill="none" stroke="#555" stroke-width="0.45"/>
<polyline points="643.2,366.4 644.4,367.6 645.6,366.4" fill="none" stroke="#555" stroke-width="0.45"/>
<polyline points="622.6,371.2 621.4,372.4 622.6,373.6" fill="none" stroke="#555" stroke-width="0.45"/>
<polyline points="637.8,371.2 639,372.4 637.8,373.6" fill="none" stroke="#555" stroke-width="0.45"/>
<rect x="625.2" y="370.2" width="5" height="4.6" fill="#cdcdcd"/>
<rect x="0" y="376" width="650" height="8.8" fill="#f0f0f0"/>
<rect x="1.4" y="378.4" width="59.8" height="5.8" fill="#f4f4f4" stroke="#b8b8b8" stroke-width="0.45"/>
<text x="2.6" y="383" font-size="4.3" fill="#222" textLength="41" lengthAdjust="spacingAndGlyphs" class="ui">41.6296, 11.2868, 0.0000</text>
<rect x="63.4" y="378.6" width="10.2" height="5.6" fill="#eeeeee" stroke="#d4d4d4" stroke-width="0.4"/>
<text x="64.4" y="383.1" font-size="4.3" fill="#000" textLength="8.2" lengthAdjust="spacingAndGlyphs" class="ui" stroke="#000" stroke-width="0.1">SNAP</text>
<rect x="75.2" y="378.6" width="10" height="5.6" fill="#eeeeee" stroke="#d4d4d4" stroke-width="0.4"/>
<text x="76.2" y="383.1" font-size="4.3" fill="#000" textLength="8" lengthAdjust="spacingAndGlyphs" class="ui" stroke="#000" stroke-width="0.1">GRID</text>
<rect x="87.6" y="378.6" width="13.6" height="5.6" fill="#eeeeee" stroke="#d4d4d4" stroke-width="0.4"/>
<text x="88.6" y="383.1" font-size="4.3" fill="#000" textLength="11.6" lengthAdjust="spacingAndGlyphs" class="ui" stroke="#000" stroke-width="0.1">ORTHO</text>
<rect x="103" y="378.6" width="13.4" height="5.6" fill="#fbfbfb" stroke="#d0d0d0" stroke-width="0.4"/>
<text x="104" y="383.1" font-size="4.3" fill="#000" textLength="11.4" lengthAdjust="spacingAndGlyphs" class="ui" stroke="#000" stroke-width="0.1">POLAR</text>
<rect x="118" y="378.6" width="14.6" height="5.6" fill="#f6f6f6" stroke="#5a5a5a" stroke-width="0.5"/>
<text x="119" y="383.1" font-size="4.3" fill="#000" textLength="12.6" lengthAdjust="spacingAndGlyphs" class="ui" stroke="#000" stroke-width="0.1">OSNAP</text>
<rect x="133.6" y="378.6" width="16.6" height="5.6" fill="#f6f6f6" stroke="#5a5a5a" stroke-width="0.5"/>
<text x="134.6" y="383.1" font-size="4.3" fill="#000" textLength="14.6" lengthAdjust="spacingAndGlyphs" class="ui" stroke="#000" stroke-width="0.1">OTRACK</text>
<rect x="151.6" y="378.6" width="11" height="5.6" fill="#eeeeee" stroke="#d4d4d4" stroke-width="0.4"/>
<text x="152.6" y="383.1" font-size="4.3" fill="#000" textLength="9" lengthAdjust="spacingAndGlyphs" class="ui" stroke="#000" stroke-width="0.1">DUCS</text>
<rect x="164" y="378.6" width="9.2" height="5.6" fill="#f6f6f6" stroke="#5a5a5a" stroke-width="0.5"/>
<text x="165" y="383.1" font-size="4.3" fill="#000" textLength="7.2" lengthAdjust="spacingAndGlyphs" class="ui" stroke="#000" stroke-width="0.1">DYN</text>
<rect x="174.8" y="378.6" width="8.6" height="5.6" fill="#eeeeee" stroke="#d4d4d4" stroke-width="0.4"/>
<text x="175.8" y="383.1" font-size="4.3" fill="#000" textLength="6.6" lengthAdjust="spacingAndGlyphs" class="ui" stroke="#000" stroke-width="0.1">LWT</text>
<rect x="185" y="378.6" width="14.2" height="5.6" fill="#f6f6f6" stroke="#5a5a5a" stroke-width="0.5"/>
<text x="186" y="383.1" font-size="4.3" fill="#000" textLength="12.2" lengthAdjust="spacingAndGlyphs" class="ui" stroke="#000" stroke-width="0.1">MODEL</text>
<rect x="614.8" y="378.2" width="26.8" height="6" fill="#f2f2f2" stroke="#bdbdbd" stroke-width="0.45"/>
<rect x="616.4" y="379" width="3.2" height="4.4" fill="#6f9fe0"/>
<line x1="618" y1="379" x2="618" y2="383.6" stroke="#2f5598" stroke-width="0.6"/>
<rect x="622.4" y="380.6" width="3.8" height="3" fill="#e8c030" stroke="#8c7430" stroke-width="0.3"/>
<rect x="623.6" y="378.8" width="2.4" height="2.2" fill="none" stroke="#a08428" stroke-width="0.5"/>
<rect x="629.2" y="379" width="3" height="4.4" fill="#dfeaf8" stroke="#4a70b0" stroke-width="0.4"/>
<circle cx="633" cy="382.6" r="1.3" fill="#38a848"/>
<polygon points="637.8,382 639.6,382 638.7,383" fill="#222" stroke="#222" stroke-width="0.2"/>
<rect x="642.8" y="378.6" width="5.8" height="5.4" fill="#8ab4ea" stroke="#c4dcf8" stroke-width="0.6"/>
<rect x="0" y="384" width="650" height="0.8" fill="#fbfbfb"/>
<rect x="0" y="384.8" width="650" height="15.2" fill="#04060a"/>
<rect x="4.8" y="389.5" width="2.9" height="2.7" fill="#f6f6f6"/>
<rect x="4.8" y="392.6" width="2.9" height="2.7" fill="#f6f6f6"/>
<rect x="8.1" y="389.5" width="2.9" height="2.7" fill="#f6f6f6"/>
<rect x="8.1" y="392.6" width="2.9" height="2.7" fill="#f6f6f6"/>
<rect x="22.2" y="390.4" width="5" height="4.4" fill="none" stroke="#d0d0d0" stroke-width="0.6"/>
<line x1="21" y1="391.4" x2="21" y2="394" stroke="#aaa" stroke-width="0.5"/>
<line x1="28.4" y1="391.4" x2="28.4" y2="394" stroke="#aaa" stroke-width="0.5"/>
<path d="M44.2 393.6 q-1.0 2.2 -3.2 2.0 a3.1 3.1 0 1 1 3.3 -3.2 h-6.0" fill="none" stroke="#48b4f0" stroke-width="1.5"/>
<path d="M37.8 396.2 q0.6 -6.6 7.2 -7.4" fill="none" stroke="#e8c040" stroke-width="0.7"/>
<path d="M61.2 394.0 q-1.2 2.0 -3.2 1.8 a3.1 3.1 0 1 1 3.3 -3.4 h-5.4" fill="none" stroke="#1a78dc" stroke-width="1.7"/>
<rect x="70.9" y="390" width="7.4" height="6" fill="#f6d468"/>
<rect x="70.9" y="389.2" width="3.2" height="1.2" fill="#e4b83c"/>
<rect x="72.2" y="393.2" width="4.8" height="2.8" fill="#48a8e8"/>
<rect x="73.6" y="394.4" width="2" height="1.6" fill="#f6d468"/>
<rect x="67.8" y="399.3" width="13" height="0.7" fill="#8ed0c2"/>
<rect x="87.4" y="390.6" width="7" height="5.7" fill="#f4f4f4"/>
<path d="M89.2 390.6 q1.7 -3.4 3.4 0" fill="none" stroke="#f4f4f4" stroke-width="0.6"/>
<rect x="89.3" y="391.9" width="1.4" height="1.3" fill="#2a2a2a"/>
<rect x="89.3" y="393.5" width="1.4" height="1.3" fill="#2a2a2a"/>
<rect x="91" y="391.9" width="1.4" height="1.3" fill="#2a2a2a"/>
<rect x="91" y="393.5" width="1.4" height="1.3" fill="#2a2a2a"/>
<rect x="99.8" y="384.8" width="15.6" height="15.2" fill="#2b3337"/>
<rect x="99.8" y="399.3" width="15.6" height="0.7" fill="#8ed0c2"/>
<rect x="103" y="388.5" width="8.4" height="7.6" fill="#1f9a8c"/>
<rect x="104.4" y="389.8" width="1.5" height="5.2" fill="#e2f6f2"/>
<rect x="106.8" y="390.8" width="1.4" height="4.2" fill="#c8ece6"/>
<rect x="108.8" y="389.8" width="1.4" height="5.2" fill="#e2f6f2"/>
<polyline points="121,396.2 124.7,388.4 128.4,396.2" fill="none" stroke="#d42424" stroke-width="1.4"/>
<line x1="122.6" y1="394" x2="126.8" y2="394" stroke="#d42424" stroke-width="1.1"/>
<polyline points="120.2,396.4 124.7,387.6 129.2,396.4" fill="none" stroke="#f0c8c8" stroke-width="0.3"/>
<rect x="137.6" y="387.8" width="6.2" height="8.4" fill="#1f6f66"/>
<rect x="139" y="390" width="3.4" height="3.4" fill="#9ad4ca"/>
<rect x="139.8" y="394.2" width="2" height="1" fill="#bfe6e0"/>
<circle cx="157.2" cy="392.4" r="4" fill="#f48a1c"/>
<circle cx="157.6" cy="392.2" r="2.2" fill="#5a4ad8"/>
<circle cx="155.6" cy="390.2" r="1.3" fill="#fcc838"/>
<path d="M153.6 393.6 q2.8 3.6 6.8 1.0" fill="none" stroke="#e8481c" stroke-width="1.1"/>
<rect x="150.8" y="399.3" width="13" height="0.7" fill="#8ed0c2"/>
<polygon points="170.6,388.6 177.6,388.6 177.6,396.4 172.6,396.4 170.6,394.4" fill="#dc2a2a" stroke="#dc2a2a" stroke-width="0.2"/>
<path d="M176.2 390.4 h-3.4 v1.9 h3.0 v2.2 h-3.6" fill="none" stroke="#fff" stroke-width="0.8"/>
<polygon points="190.8,387.8 193.8,395.2 187.8,395.2" fill="#f48a18" stroke="#f48a18" stroke-width="0.2"/>
<line x1="189.4" y1="391.4" x2="192.2" y2="391.4" stroke="#fafafa" stroke-width="1"/>
<line x1="188.8" y1="393.4" x2="192.8" y2="393.4" stroke="#fafafa" stroke-width="0.8"/>
<rect x="186.8" y="395" width="8" height="1.4" fill="#e47a10"/>
<rect x="183.8" y="399.3" width="13.8" height="0.7" fill="#8ed0c2"/>
<polyline points="586.4,393.4 587.8,391.8 589.2,393.4" fill="none" stroke="#e8e8e8" stroke-width="0.5"/>
<rect x="594.2" y="391" width="2.4" height="2" fill="none" stroke="#e8e8e8" stroke-width="0.5"/><rect x="596" y="392.2" width="2.4" height="2.2" fill="#000" stroke="#e8e8e8" stroke-width="0.5"/>
<polyline points="602.4,394.4 606.2,394.4 606.2,390.6" fill="none" stroke="#e8e8e8" stroke-width="0.5"/><line x1="602.6" y1="392.8" x2="604" y2="391.2" stroke="#aaa" stroke-width="0.4"/>
<polygon points="609.8,392 610.8,392 612,390.8 612,394.4 610.8,393.2 609.8,393.2" fill="none" stroke="#e8e8e8" stroke-width="0.4"/><path d="M612.8 391.2 q1.2 1.4 0 2.8" fill="none" stroke="#e8e8e8" stroke-width="0.4"/><path d="M613.6 390.6 q1.8 2.0 0 4.0" fill="none" stroke="#aaa" stroke-width="0.4"/>
<polygon points="618,390 622.8,390 622.8,394 621,394 619.8,395.2 619.8,394 618,394" fill="#f4f4f4" stroke="#e8e8e8" stroke-width="0.3"/><line x1="619" y1="391.4" x2="621.8" y2="391.4" stroke="#555" stroke-width="0.4"/><line x1="619" y1="392.6" x2="621.8" y2="392.6" stroke="#555" stroke-width="0.4"/>
<text x="628.2" y="390.5" font-size="4.5" fill="#f0f0f0" textLength="15.8" lengthAdjust="spacingAndGlyphs" class="ui">12:17 AM</text>
<text x="629.2" y="397" font-size="4.5" fill="#f0f0f0" textLength="14.8" lengthAdjust="spacingAndGlyphs" class="ui">6/21/2018</text>
<line x1="649.2" y1="384.8" x2="649.2" y2="400" stroke="#555" stroke-width="0.4"/>
</g>
</svg>
</body>
</html>
